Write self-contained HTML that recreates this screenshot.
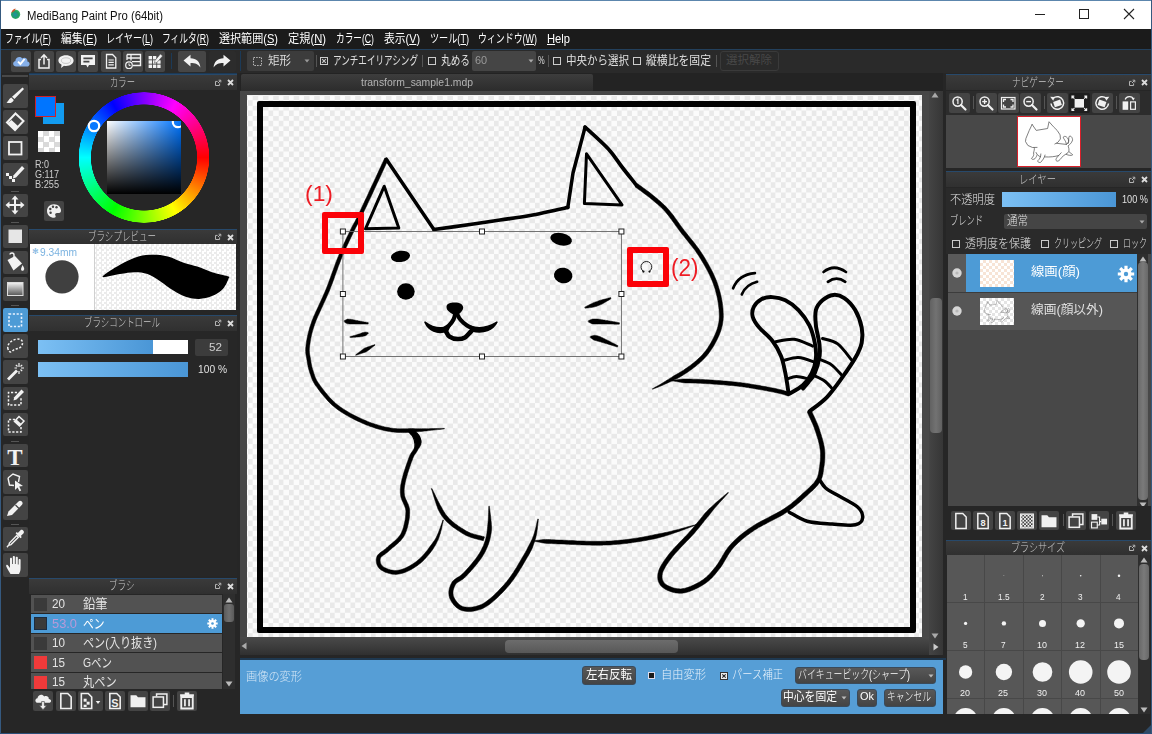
<!DOCTYPE html>
<html lang="ja"><head><meta charset="utf-8"><title>MediBang Paint Pro (64bit)</title>
<style>
html,body{margin:0;padding:0;}
body{width:1152px;height:734px;overflow:hidden;background:#262626;font-family:"Liberation Sans","Noto Sans CJK JP",sans-serif;position:relative;}
#app{position:absolute;left:0;top:0;width:1152px;height:734px;overflow:hidden;}
#app div,#app span.t,#app svg{position:absolute;box-sizing:border-box;}
#app div{overflow:hidden;}
span.t{white-space:nowrap;transform-origin:0 0;}
</style></head><body><div id="app">
<div style="left:0px;top:0px;width:1152px;height:734px;background:#262626;"></div>
<div style="left:0px;top:0px;width:1152px;height:29px;background:#ffffff;"></div>
<svg style="left:8px;top:6px;" width="16" height="16" viewBox="0 0 16 16"><defs><radialGradient id="ig" cx="0.45" cy="0.55" r="0.6"><stop offset="0" stop-color="#1f8fa8"/><stop offset="0.6" stop-color="#22a066"/><stop offset="1" stop-color="#3fc26c"/></radialGradient></defs><circle cx="7.6" cy="8.3" r="4.6" fill="url(#ig)"/><path d="M3.4 7.2 C3.6 4.5 5.6 2.6 7.6 2.4 C7.3 4 6.6 5.2 5.2 5.8 C4.4 6.2 3.8 6.6 3.4 7.2Z" fill="#d4532a"/></svg>
<span class="t" style="left:26.5px;top:8.5px;font-size:12px;line-height:14px;color:#111;transform:scaleX(0.9439);">MediBang Paint Pro (64bit)</span>
<svg style="left:1034px;top:8px;" width="12" height="12" viewBox="0 0 12 12"><path d="M1 6.5H11" stroke="#222" stroke-width="1" fill="none"/></svg>
<svg style="left:1078px;top:8px;" width="12" height="12" viewBox="0 0 12 12"><rect x="1.5" y="1.5" width="9" height="9" stroke="#222" stroke-width="1" fill="none"/></svg>
<svg style="left:1123px;top:8px;" width="12" height="12" viewBox="0 0 12 12"><path d="M1 1L11 11M11 1L1 11" stroke="#222" stroke-width="1.1" fill="none"/></svg>
<div style="left:0px;top:29px;width:1152px;height:20px;background:#1b1b1b;"></div>
<span class="t" style="left:5px;top:32px;font-size:12px;line-height:14px;color:#fff;transform:scaleX(0.7262);">ファイル(<u>F</u>)</span>
<span class="t" style="left:61px;top:32px;font-size:12px;line-height:14px;color:#fff;transform:scaleX(0.8996);">編集(<u>E</u>)</span>
<span class="t" style="left:106px;top:32px;font-size:12px;line-height:14px;color:#fff;transform:scaleX(0.7541);">レイヤー(<u>L</u>)</span>
<span class="t" style="left:162px;top:32px;font-size:12px;line-height:14px;color:#fff;transform:scaleX(0.7294);">フィルタ(<u>R</u>)</span>
<span class="t" style="left:219px;top:32px;font-size:12px;line-height:14px;color:#fff;transform:scaleX(0.9216);">選択範囲(<u>S</u>)</span>
<span class="t" style="left:288px;top:32px;font-size:12px;line-height:14px;color:#fff;transform:scaleX(0.9343);">定規(<u>N</u>)</span>
<span class="t" style="left:336px;top:32px;font-size:12px;line-height:14px;color:#fff;transform:scaleX(0.7214);">カラー(<u>C</u>)</span>
<span class="t" style="left:384px;top:32px;font-size:12px;line-height:14px;color:#fff;transform:scaleX(0.8996);">表示(<u>V</u>)</span>
<span class="t" style="left:430px;top:32px;font-size:12px;line-height:14px;color:#fff;transform:scaleX(0.7596);">ツール(<u>T</u>)</span>
<span class="t" style="left:478px;top:32px;font-size:12px;line-height:14px;color:#fff;transform:scaleX(0.7437);">ウィンドウ(<u>W</u>)</span>
<span class="t" style="left:547px;top:32px;font-size:12px;line-height:14px;color:#fff;transform:scaleX(0.9316);"><u>H</u>elp</span>
<div style="left:0px;top:49px;width:1152px;height:24px;background:#2a2a2a;"></div>
<div style="left:0px;top:49px;width:1152px;height:1px;background:#23405c;"></div>
<div style="left:11px;top:51px;width:20px;height:20.5px;background:#464646;border-radius:2px;"></div>
<div style="left:33.5px;top:51px;width:20px;height:20.5px;background:#464646;border-radius:2px;"></div>
<div style="left:56px;top:51px;width:20px;height:20.5px;background:#464646;border-radius:2px;"></div>
<div style="left:78.2px;top:51px;width:20px;height:20.5px;background:#464646;border-radius:2px;"></div>
<div style="left:100.5px;top:51px;width:20px;height:20.5px;background:#464646;border-radius:2px;"></div>
<div style="left:122.5px;top:51px;width:20px;height:20.5px;background:#464646;border-radius:2px;"></div>
<div style="left:145px;top:51px;width:20px;height:20.5px;background:#464646;border-radius:2px;"></div>
<div style="left:170.5px;top:53px;width:1px;height:16px;background:#1c3a57;"></div>
<div style="left:178px;top:51px;width:27.5px;height:20.5px;background:#464646;border-radius:2px;"></div>
<div style="left:208.5px;top:51px;width:27px;height:20.5px;background:#2c2c2c;border-radius:2px;"></div>
<div style="left:240px;top:51px;width:1px;height:20px;background:#1c3a57;"></div>
<div style="left:8px;top:72.5px;width:229px;height:1px;background:#1c3a57;"></div>
<svg style="left:11px;top:51px;" width="20" height="20.5" viewBox="0 0 20 20.5"><path d="M5.2 15.5C1.6 15.5 1 10.8 4.4 10C4.4 6.4 9 4.6 11.2 7.4C13.6 5.6 17 7.4 16.4 10.4C19.6 10.8 19.2 15.5 16 15.5Z" fill="#86b0ea"/><path d="M7 10.6L9.4 13L13.6 8" fill="none" stroke="#fff" stroke-width="1.9"/></svg>
<svg style="left:33.5px;top:51px;" width="20" height="20.5" viewBox="0 0 20 20.5"><path d="M7 8.5H5V17H15V8.5H13" fill="none" stroke="#f2f2f2" stroke-width="1.5"/><path d="M10 13.5V4.2M7 7L10 3.8L13 7" fill="none" stroke="#f2f2f2" stroke-width="1.5"/></svg>
<svg style="left:56px;top:51px;" width="20" height="20.5" viewBox="0 0 20 20.5"><path d="M10 4.2C14.6 4.2 17.6 6.6 17.6 9.6C17.6 12.6 14.6 15 10 15C9.2 15 8.6 14.9 8 14.8L5 17L5.6 13.8C3.6 12.8 2.4 11.4 2.4 9.6C2.4 6.6 5.4 4.2 10 4.2Z" fill="#f2f2f2"/><ellipse cx="10" cy="9.6" rx="4.6" ry="2.8" fill="none" stroke="#bbb" stroke-width="0.8"/></svg>
<svg style="left:78.2px;top:51px;" width="20" height="20.5" viewBox="0 0 20 20.5"><path d="M3 4H17V14H11L9.6 16.4L8.2 14H3Z" fill="#f2f2f2"/><path d="M5.4 7.4H14.6M5.4 10.6H11.4" stroke="#464646" stroke-width="1.6"/></svg>
<svg style="left:100.5px;top:51px;" width="20" height="20.5" viewBox="0 0 20 20.5"><path d="M5.5 3.5H11.5L14.8 6.8V17H5.5Z" fill="none" stroke="#f2f2f2" stroke-width="1.3"/><path d="M7.5 9H12.8M7.5 11.4H12.8M7.5 13.8H12.8" stroke="#f2f2f2" stroke-width="1.2"/></svg>
<svg style="left:122.5px;top:51px;" width="20" height="20.5" viewBox="0 0 20 20.5"><path d="M4 3.5H17.5V14.5H10" fill="none" stroke="#f2f2f2" stroke-width="1.4"/><path d="M4 3.5V9M8 3.5V9.4M4 7H17.5M9 10.6H17.5" fill="none" stroke="#f2f2f2" stroke-width="1.3"/><circle cx="6" cy="14.2" r="3.3" fill="#464646" stroke="#f2f2f2" stroke-width="1.2"/><path d="M6 12.4V14.4H7.6" fill="none" stroke="#f2f2f2" stroke-width="1"/></svg>
<svg style="left:145px;top:51px;" width="20" height="20.5" viewBox="0 0 20 20.5"><rect x="3.6" y="5.0" width="3.4" height="3.4" fill="#f2f2f2"/><rect x="7.9" y="5.0" width="3.4" height="3.4" fill="#f2f2f2"/><rect x="3.6" y="9.3" width="3.4" height="3.4" fill="#f2f2f2"/><rect x="7.9" y="9.3" width="3.4" height="3.4" fill="#f2f2f2"/><rect x="12.2" y="9.3" width="3.4" height="3.4" fill="#f2f2f2"/><rect x="3.6" y="13.6" width="3.4" height="3.4" fill="#f2f2f2"/><rect x="7.9" y="13.6" width="3.4" height="3.4" fill="#f2f2f2"/><rect x="12.2" y="13.6" width="3.4" height="3.4" fill="#f2f2f2"/><path d="M15.4 3L17.6 5L12 11.4L9.4 12.2L10 9.4Z" fill="#f2f2f2" stroke="#464646" stroke-width="0.5"/></svg>
<svg style="left:178px;top:51px;" width="27.5" height="20.5" viewBox="0 0 27.5 20.5"><path d="M5.5 9.6L12.5 3.8V7.2C18.5 7.4 22 10.5 22.4 16.6C20.4 13.4 17.5 12 12.5 12V15.4Z" fill="#f2f2f2"/></svg>
<svg style="left:208.5px;top:51px;" width="27" height="20.5" viewBox="0 0 27 20.5"><path d="M21.5 9.6L14.5 3.8V7.2C8.5 7.4 5 10.5 4.6 16.6C6.6 13.4 9.5 12 14.5 12V15.4Z" fill="#f2f2f2"/></svg>
<div style="left:247px;top:51px;width:67px;height:20px;background:#3c3c3c;border-radius:2px;"></div>
<svg style="left:252px;top:56px;" width="11" height="11" viewBox="0 0 11 11"><rect x="1.5" y="1.5" width="8" height="8" fill="none" stroke="#bbb" stroke-width="1" stroke-dasharray="1.5 1.2"/></svg>
<span class="t" style="left:268px;top:53.5px;font-size:12px;line-height:14px;color:#ddd;transform:scaleX(0.9577);">矩形</span>
<svg style="left:303px;top:58px;" width="8" height="6" viewBox="0 0 8 6"><path d="M1.5 1.5L4 4.5L6.5 1.5Z" fill="#999"/></svg>
<div style="left:316px;top:55px;width:1px;height:12px;background:#555;"></div>
<svg style="left:320px;top:57px;" width="8" height="8" viewBox="0 0 8 8"><rect x="0.5" y="0.5" width="7" height="7" fill="none" stroke="#ccc" stroke-width="1"/><path d="M2.2 2.2L5.8 5.8M5.8 2.2L2.2 5.8" stroke="#ccc" stroke-width="1.1"/></svg>
<span class="t" style="left:333px;top:53.5px;font-size:12px;line-height:14px;color:#e0e0e0;transform:scaleX(0.714);">アンチエイリアシング</span>
<div style="left:422px;top:55px;width:1px;height:12px;background:#555;"></div>
<svg style="left:428px;top:57px;" width="8" height="8" viewBox="0 0 8 8"><rect x="0.5" y="0.5" width="7" height="7" fill="none" stroke="#ccc" stroke-width="1"/></svg>
<span class="t" style="left:441px;top:53.5px;font-size:12px;line-height:14px;color:#e0e0e0;transform:scaleX(0.8052);">丸める</span>
<div style="left:472px;top:51px;width:64px;height:20px;background:#454545;border-radius:2px;"></div>
<span class="t" style="left:475px;top:54px;font-size:11.5px;line-height:13.5px;color:#999;transform:scaleX(0.95);">60</span>
<svg style="left:527px;top:58px;" width="8" height="6" viewBox="0 0 8 6"><path d="M1.5 1.5L4 4.5L6.5 1.5Z" fill="#aaa"/></svg>
<span class="t" style="left:538px;top:54.5px;font-size:10px;line-height:12px;color:#ddd;transform:scaleX(0.75);">%</span>
<div style="left:548px;top:55px;width:1px;height:12px;background:#555;"></div>
<svg style="left:553px;top:57px;" width="8" height="8" viewBox="0 0 8 8"><rect x="0.5" y="0.5" width="7" height="7" fill="none" stroke="#ccc" stroke-width="1"/></svg>
<span class="t" style="left:566px;top:53.5px;font-size:12px;line-height:14px;color:#e0e0e0;transform:scaleX(0.8748);">中央から選択</span>
<svg style="left:633px;top:57px;" width="8" height="8" viewBox="0 0 8 8"><rect x="0.5" y="0.5" width="7" height="7" fill="none" stroke="#ccc" stroke-width="1"/></svg>
<span class="t" style="left:646px;top:53.5px;font-size:12px;line-height:14px;color:#e0e0e0;transform:scaleX(0.9026);">縦横比を固定</span>
<div style="left:716px;top:55px;width:1px;height:12px;background:#555;"></div>
<div style="left:720px;top:51px;width:59px;height:20px;border:1px solid #3a3a3a;border-radius:3px;"></div>
<span class="t" style="left:726px;top:54px;font-size:11.5px;line-height:13.5px;color:#484848;">選択解除</span>
<div style="left:0px;top:73px;width:29px;height:642px;background:#262626;"></div>
<div style="left:2px;top:75px;width:26px;height:2px;background:#484848;"></div>
<div style="left:3px;top:84.0px;width:24.5px;height:23.6px;background:#444;border-radius:2px;"></div>
<svg style="left:3.2px;top:83.8px;" width="24" height="24" viewBox="0 0 24 24"><path d="M19.5 3.5L21 5L11.5 15L9 12.8Z" fill="#f2f2f2"/><path d="M8.2 13.6L10.8 16C10 18.8 6.5 19.8 3.5 18.6C5.4 17.6 5.6 15 8.2 13.6Z" fill="#f2f2f2"/></svg>
<div style="left:3px;top:110.2px;width:24.5px;height:23.6px;background:#444;border-radius:2px;"></div>
<svg style="left:3.2px;top:110.0px;" width="24" height="24" viewBox="0 0 24 24"><path d="M12.5 3.5L20.5 11L12 20L4 12.5Z" fill="none" stroke="#f2f2f2" stroke-width="2"/><path d="M8.5 10L15.5 16.5L12 20L4.8 12.9Z" fill="#f2f2f2"/></svg>
<div style="left:3px;top:136.4px;width:24.5px;height:23.6px;background:#444;border-radius:2px;"></div>
<svg style="left:3.2px;top:136.2px;" width="24" height="24" viewBox="0 0 24 24"><rect x="6" y="6" width="12.5" height="12.5" fill="none" stroke="#f2f2f2" stroke-width="1.8"/></svg>
<div style="left:3px;top:162.6px;width:24.5px;height:23.6px;background:#444;border-radius:2px;"></div>
<svg style="left:3.2px;top:162.4px;" width="24" height="24" viewBox="0 0 24 24"><path d="M19 4L21.5 6.5L13 15.5L9.8 16.5L10.6 13.2Z" fill="#f2f2f2"/><rect x="3" y="11" width="3" height="3" fill="#f2f2f2"/><rect x="6" y="14" width="3" height="3" fill="#f2f2f2"/><rect x="9" y="17" width="3" height="3" fill="#f2f2f2"/></svg>
<div style="left:11px;top:190.79999999999998px;width:8px;height:1px;background:#555;"></div>
<div style="left:3px;top:193.6px;width:24.5px;height:23.6px;background:#444;border-radius:2px;"></div>
<svg style="left:3.2px;top:193.4px;" width="24" height="24" viewBox="0 0 24 24"><path d="M12 2.5L15.5 6.5H13V11H17.5V8.5L21.5 12L17.5 15.5V13H13V17.5H15.5L12 21.5L8.5 17.5H11V13H6.5V15.5L2.5 12L6.5 8.5V11H11V6.5H8.5Z" fill="#f2f2f2"/></svg>
<div style="left:11px;top:221.79999999999998px;width:8px;height:1px;background:#555;"></div>
<div style="left:3px;top:224.6px;width:24.5px;height:23.6px;background:#444;border-radius:2px;"></div>
<svg style="left:3.2px;top:224.4px;" width="24" height="24" viewBox="0 0 24 24"><rect x="5.5" y="5.5" width="13.5" height="13.5" fill="#e6e6e6"/></svg>
<div style="left:3px;top:250.8px;width:24.5px;height:23.6px;background:#444;border-radius:2px;"></div>
<svg style="left:3.2px;top:250.6px;" width="24" height="24" viewBox="0 0 24 24"><path d="M7 3.5C7 1.5 11 1.5 11 4V8" fill="none" stroke="#f2f2f2" stroke-width="1.4"/><path d="M4.5 9L12 5L19 12.5L10.5 19.5Z" fill="#f2f2f2"/><path d="M19.5 14C21 16.5 22 18 20.5 19.5C19 20.5 17.5 19 18.2 17.2Z" fill="#f2f2f2"/></svg>
<div style="left:3px;top:277.0px;width:24.5px;height:23.6px;background:#444;border-radius:2px;"></div>
<svg style="left:3.2px;top:276.8px;" width="24" height="24" viewBox="0 0 24 24"><defs><linearGradient id="tg" x1="0" y1="0" x2="0" y2="1"><stop offset="0" stop-color="#f4f4f4"/><stop offset="1" stop-color="#555"/></linearGradient></defs><rect x="4.5" y="5.5" width="15.5" height="13" fill="url(#tg)" stroke="#ddd" stroke-width="1"/></svg>
<div style="left:11px;top:305.2px;width:8px;height:1px;background:#555;"></div>
<div style="left:3px;top:308.0px;width:24.5px;height:23.6px;background:#4d9bd6;border-radius:2px;"></div>
<svg style="left:3.2px;top:307.8px;" width="24" height="24" viewBox="0 0 24 24"><rect x="6" y="6" width="12.5" height="12.5" fill="none" stroke="#e8f2ff" stroke-width="1.6" stroke-dasharray="2.2 1.6"/></svg>
<div style="left:3px;top:334.2px;width:24.5px;height:23.6px;background:#444;border-radius:2px;"></div>
<svg style="left:3.2px;top:334.0px;" width="24" height="24" viewBox="0 0 24 24"><path d="M5 15C3.5 11 8 6 13.5 5.2C19 4.5 21 8 18.5 12C16.5 15.5 12 14 9.5 17C8 19 5.8 18 5 15Z" fill="none" stroke="#f2f2f2" stroke-width="1.5" stroke-dasharray="2.2 1.6"/></svg>
<div style="left:3px;top:360.4px;width:24.5px;height:23.6px;background:#444;border-radius:2px;"></div>
<svg style="left:3.2px;top:360.2px;" width="24" height="24" viewBox="0 0 24 24"><path d="M4 18.5L13 9.5L15 11.5L6 20.5Z" fill="#f2f2f2"/><path d="M16 3V7M16 11V14M11.5 8H14M18 8H21M12.8 4.8L14.5 6.5M19.2 4.8L17.5 6.5M19.2 11.2L17.5 9.5" stroke="#f2f2f2" stroke-width="1.2"/></svg>
<div style="left:3px;top:386.6px;width:24.5px;height:23.6px;background:#444;border-radius:2px;"></div>
<svg style="left:3.2px;top:386.4px;" width="24" height="24" viewBox="0 0 24 24"><path d="M14 6.5H5.5V19H18V11" fill="none" stroke="#f2f2f2" stroke-width="1.5" stroke-dasharray="2.2 1.6"/><path d="M18.5 3.5L21 6L13.5 13.5L10.5 14.5L11.2 11.2Z" fill="#f2f2f2"/></svg>
<div style="left:3px;top:412.8px;width:24.5px;height:23.6px;background:#444;border-radius:2px;"></div>
<svg style="left:3.2px;top:412.6px;" width="24" height="24" viewBox="0 0 24 24"><path d="M12 6.5H5.5V19H18V13" fill="none" stroke="#f2f2f2" stroke-width="1.5" stroke-dasharray="2.2 1.6"/><path d="M16 3.5L21 8L16.5 13L11.5 8.5Z" fill="none" stroke="#f2f2f2" stroke-width="1.5"/><path d="M13.5 6.5L18.5 11L16.5 13L11.5 8.5Z" fill="#f2f2f2"/></svg>
<div style="left:11px;top:440.99999999999994px;width:8px;height:1px;background:#555;"></div>
<div style="left:3px;top:443.8px;width:24.5px;height:23.6px;background:#444;border-radius:2px;"></div>
<svg style="left:3.2px;top:443.6px;" width="24" height="24" viewBox="0 0 24 24"><text x="12" y="20.5" font-family="'Liberation Serif',serif" font-size="23" font-weight="bold" text-anchor="middle" fill="#f2f2f2">T</text></svg>
<div style="left:3px;top:470.0px;width:24.5px;height:23.6px;background:#444;border-radius:2px;"></div>
<svg style="left:3.2px;top:469.8px;" width="24" height="24" viewBox="0 0 24 24"><path d="M5 8L10 4L16.5 6.5L15.5 12" fill="none" stroke="#f2f2f2" stroke-width="1.4"/><path d="M5 8L6.5 15L11 15.5" fill="none" stroke="#f2f2f2" stroke-width="1.4"/><path d="M12 10.5L20 16L16.2 16.6L18.2 20.5L16.5 21.3L14.6 17.4L12 20Z" fill="#f2f2f2"/></svg>
<div style="left:3px;top:496.2px;width:24.5px;height:23.6px;background:#444;border-radius:2px;"></div>
<svg style="left:3.2px;top:496.0px;" width="24" height="24" viewBox="0 0 24 24"><path d="M4 20L5.5 15.5L15.5 5.5C17.5 3.5 21 6.5 19 8.8L9 19Z" fill="#f2f2f2"/><path d="M12.5 9L16 12.5" stroke="#444" stroke-width="1.2"/></svg>
<div style="left:11px;top:524.4px;width:8px;height:1px;background:#555;"></div>
<div style="left:3px;top:527.2px;width:24.5px;height:23.6px;background:#444;border-radius:2px;"></div>
<svg style="left:3.2px;top:527.0px;" width="24" height="24" viewBox="0 0 24 24"><path d="M17.5 3.2C19 1.8 22 4.5 20.6 6.2L17.8 9L18.8 10L17.6 11.2L12.6 6.2L13.8 5L14.8 6Z" fill="#f2f2f2"/><path d="M13.8 8.6L15.4 10.2L8 17.6L5.8 18.2L6.4 16Z" fill="none" stroke="#f2f2f2" stroke-width="1.4"/><path d="M5.4 18.4L4 20.2" stroke="#f2f2f2" stroke-width="1.4"/></svg>
<div style="left:3px;top:553.4px;width:24.5px;height:23.6px;background:#444;border-radius:2px;"></div>
<svg style="left:3.2px;top:553.2px;" width="24" height="24" viewBox="0 0 24 24"><path d="M7.5 21C6 18.5 4 15.5 3.2 13.2C2.8 12 4.3 11.3 5.1 12.4L7 15V5.8C7 4.4 9 4.4 9 5.8V11H9.8V4C9.8 2.6 11.9 2.6 11.9 4V11H12.7V4.8C12.7 3.4 14.8 3.4 14.8 4.8V11.4H15.6V7C15.6 5.6 17.6 5.6 17.6 7V15C17.6 18 16.8 19.5 16 21Z" fill="#f2f2f2"/></svg>
<div style="left:29px;top:75px;width:208px;height:154px;background:#262626;"></div>
<div style="left:29px;top:74px;width:208px;height:1px;background:#27496b;"></div>
<div style="left:29px;top:75px;width:208px;height:15px;background:linear-gradient(#3a3a3a,#303030);"></div>
<span class="t" style="left:109.5px;top:75.5px;font-size:12px;line-height:14px;color:#c8c8c8;transform:scaleX(0.6941);font-weight:300;">カラー</span>
<svg style="left:214px;top:78.5px;" width="8" height="8" viewBox="0 0 8 8"><path d="M3.6 2.4H1.5V6.5H5.6V4.4" fill="none" stroke="#b4b4b4" stroke-width="1"/><path d="M4 4L6.6 1.4M4.6 1.2H6.8V3.4" fill="none" stroke="#b4b4b4" stroke-width="1"/></svg>
<svg style="left:225.5px;top:78px;" width="9" height="9" viewBox="0 0 9 9"><path d="M2 2L7 7M7 2L2 7" stroke="#ddd" stroke-width="1.8"/></svg>
<div style="left:43px;top:103px;width:20.5px;height:21px;background:#129bf0;"></div>
<div style="left:34.5px;top:95.5px;width:21.5px;height:21px;background:#0075ff;border:1px solid #d0202a;"></div>
<div style="left:38px;top:130.5px;width:22px;height:21.5px;background:#fff;background-image:conic-gradient(#d9d9d9 25%,#fff 0 50%,#d9d9d9 0 75%,#fff 0);background-size:11px 11px;"></div>
<span class="t" style="left:35px;top:158px;font-size:10.5px;line-height:12.5px;color:#cfcfcf;transform:scaleX(0.8566);">R:0</span>
<span class="t" style="left:35px;top:168px;font-size:10.5px;line-height:12.5px;color:#cfcfcf;transform:scaleX(0.8624);">G:117</span>
<span class="t" style="left:35px;top:178px;font-size:10.5px;line-height:12.5px;color:#cfcfcf;transform:scaleX(0.8742);">B:255</span>
<div style="left:43.5px;top:201px;width:20px;height:20px;background:#444;border-radius:2px;"></div>
<svg style="left:44.5px;top:202px;" width="18" height="18" viewBox="0 0 18 18"><path d="M9 2.2C4.5 2.2 2 5.5 2 9C2 13 5.5 15.8 9 15.8C10.8 15.8 11 14.6 10.4 13.6C9.6 12.2 10.6 11 12 11H14C15.4 11 16 10 16 8.6C16 5 13 2.2 9 2.2Z" fill="#f0f0f0"/><circle cx="5.3" cy="7" r="1.2" fill="#444"/><circle cx="8" cy="4.8" r="1.2" fill="#444"/><circle cx="11.5" cy="5.2" r="1.2" fill="#444"/><circle cx="5.6" cy="10.8" r="1.2" fill="#444"/></svg>
<div style="left:78px;top:91.5px;width:131.5px;height:131.5px;background:conic-gradient(from 90deg,#f00,#ff0,#0f0,#0ff,#00f,#f0f,#f00);border-radius:50%;-webkit-mask:radial-gradient(circle closest-side,transparent 0 80.6%,#000 81.4% 99.2%,transparent 100%);mask:radial-gradient(circle closest-side,transparent 0 80.6%,#000 81.4% 99.2%,transparent 100%);"></div>
<div style="left:107px;top:120.5px;width:73.5px;height:73px;background:#0075ff;background-image:linear-gradient(to bottom,rgba(0,0,0,0),#000),linear-gradient(to right,#fff,rgba(255,255,255,0));"><svg style="left:62.5px;top:-6.5px" width="16" height="16"><circle cx="8" cy="8" r="5.2" fill="none" stroke="#fff" stroke-width="2.2"/></svg></div>
<svg style="left:86px;top:117.5px;" width="16" height="16" viewBox="0 0 16 16"><circle cx="8" cy="8" r="5.2" fill="#0a78ff" stroke="#fff" stroke-width="2.2"/></svg>
<div style="left:29px;top:228.5px;width:208px;height:1px;background:#27496b;"></div>
<div style="left:29px;top:229.5px;width:208px;height:14px;background:linear-gradient(#3a3a3a,#303030);"></div>
<span class="t" style="left:88.0px;top:230.0px;font-size:12px;line-height:14px;color:#c8c8c8;transform:scaleX(0.7101);font-weight:300;">ブラシプレビュー</span>
<svg style="left:214px;top:233.0px;" width="8" height="8" viewBox="0 0 8 8"><path d="M3.6 2.4H1.5V6.5H5.6V4.4" fill="none" stroke="#b4b4b4" stroke-width="1"/><path d="M4 4L6.6 1.4M4.6 1.2H6.8V3.4" fill="none" stroke="#b4b4b4" stroke-width="1"/></svg>
<svg style="left:225.5px;top:232.5px;" width="9" height="9" viewBox="0 0 9 9"><path d="M2 2L7 7M7 2L2 7" stroke="#ddd" stroke-width="1.8"/></svg>
<div style="left:29.5px;top:243.5px;width:64.5px;height:66px;background:#fff;"></div>
<div style="left:94px;top:243.5px;width:142px;height:66px;background:#fff;background-image:conic-gradient(#ebebeb 25%,#fff 0 50%,#ebebeb 0 75%,#fff 0);background-size:5px 5px;"></div>
<div style="left:93.8px;top:243.5px;width:1px;height:66px;background:#d0d0d0;"></div>
<span class="t" style="left:31.5px;top:247px;font-size:8px;line-height:10px;color:#7ab2e0;">✻</span>
<span class="t" style="left:39.5px;top:246px;font-size:10.5px;line-height:12.5px;color:#7ab2e0;transform:scaleX(0.9753);">9.34mm</span>
<svg style="left:44px;top:259px;" width="36" height="36" viewBox="0 0 36 36"><circle cx="18" cy="17.8" r="16.6" fill="#404040"/></svg>
<svg style="left:96px;top:245px;" width="140" height="64" viewBox="96 245 140 64"><path d="M102.5 276.8C102.5 275.3 114.0 268.2 120.0 264.8C126.0 261.4 132.9 258.2 138.4 256.5C143.9 254.8 148.2 254.7 153.1 254.7C158.0 254.7 162.7 255.1 167.9 256.5C173.1 257.9 179.5 261.3 184.4 263.0C189.3 264.7 192.7 265.1 197.3 266.6C201.9 268.1 206.9 270.6 212.0 272.2C217.1 273.8 224.9 275.1 227.7 276.2C230.5 277.3 229.4 276.5 228.6 278.6C227.8 280.7 225.9 285.8 223.1 288.7C220.3 291.6 216.0 294.4 212.0 296.1C208.0 297.8 203.4 298.8 199.1 298.9C194.8 299.0 190.6 298.4 186.3 297.0C182.0 295.6 177.7 293.2 173.4 290.6C169.1 288.0 164.8 284.2 160.5 281.4C156.2 278.6 151.9 275.5 147.6 274.0C143.3 272.5 139.3 272.2 134.7 272.2C130.1 272.2 125.4 273.2 120.0 274.0C114.6 274.8 102.5 278.3 102.5 276.8Z" fill="#000"/></svg>
<div style="left:29px;top:314.5px;width:208px;height:1px;background:#27496b;"></div>
<div style="left:29px;top:315.5px;width:208px;height:15px;background:linear-gradient(#3a3a3a,#303030);"></div>
<span class="t" style="left:84.0px;top:316.0px;font-size:12px;line-height:14px;color:#c8c8c8;transform:scaleX(0.7052);font-weight:300;">ブラシコントロール</span>
<svg style="left:214px;top:319.0px;" width="8" height="8" viewBox="0 0 8 8"><path d="M3.6 2.4H1.5V6.5H5.6V4.4" fill="none" stroke="#b4b4b4" stroke-width="1"/><path d="M4 4L6.6 1.4M4.6 1.2H6.8V3.4" fill="none" stroke="#b4b4b4" stroke-width="1"/></svg>
<svg style="left:225.5px;top:318.5px;" width="9" height="9" viewBox="0 0 9 9"><path d="M2 2L7 7M7 2L2 7" stroke="#ddd" stroke-width="1.8"/></svg>
<div style="left:29px;top:331px;width:208px;height:245px;background:#272727;"></div>
<div style="left:38px;top:339.5px;width:150px;height:14.5px;background:#fff;"></div>
<div style="left:38px;top:339.5px;width:114.5px;height:14.5px;background:linear-gradient(to right,#7cc0f4,#4a96d6);"></div>
<div style="left:194.5px;top:338.5px;width:33px;height:17px;background:#3c3c3c;border-radius:2px;"></div>
<span class="t" style="left:209px;top:340.5px;font-size:11.5px;line-height:13.5px;color:#cfcfcf;transform:scaleX(1.0159);">52</span>
<div style="left:38px;top:362px;width:150px;height:14.5px;background:linear-gradient(to right,#7cc0f4,#4a96d6);"></div>
<span class="t" style="left:197.5px;top:362.5px;font-size:11.5px;line-height:13.5px;color:#e0e0e0;transform:scaleX(0.8893);">100 %</span>
<div style="left:29px;top:577.5px;width:208px;height:1px;background:#27496b;"></div>
<div style="left:29px;top:578.5px;width:208px;height:15px;background:linear-gradient(#3a3a3a,#303030);"></div>
<span class="t" style="left:109.25px;top:579.0px;font-size:12px;line-height:14px;color:#c8c8c8;transform:scaleX(0.713);font-weight:300;">ブラシ</span>
<svg style="left:214px;top:582.0px;" width="8" height="8" viewBox="0 0 8 8"><path d="M3.6 2.4H1.5V6.5H5.6V4.4" fill="none" stroke="#b4b4b4" stroke-width="1"/><path d="M4 4L6.6 1.4M4.6 1.2H6.8V3.4" fill="none" stroke="#b4b4b4" stroke-width="1"/></svg>
<svg style="left:225.5px;top:581.5px;" width="9" height="9" viewBox="0 0 9 9"><path d="M2 2L7 7M7 2L2 7" stroke="#ddd" stroke-width="1.8"/></svg>
<div style="left:29px;top:594px;width:208px;height:121px;background:#262626;"></div>
<div style="left:31px;top:594.8px;width:191px;height:18.6px;background:#525252;"></div>
<div style="left:34px;top:597.8px;width:13px;height:13px;background:#3a3a3a;"></div>
<span class="t" style="left:51.5px;top:597.3px;font-size:12px;line-height:14px;color:#e4e4e4;transform:scaleX(0.9731);">20</span>
<span class="t" style="left:82.5px;top:596.3px;font-size:13px;line-height:15px;color:#e4e4e4;transform:scaleX(0.9456);">鉛筆</span>
<div style="left:31px;top:614.2px;width:191px;height:18.6px;background:#4d9bd6;"></div>
<div style="left:34px;top:617.2px;width:13px;height:13px;background:#3a3a3a;border:1px solid #1c2c40;"></div>
<span class="t" style="left:51.5px;top:616.8px;font-size:12px;line-height:14px;color:#b89ad8;transform:scaleX(1.0702);">53.0</span>
<span class="t" style="left:82.5px;top:615.8px;font-size:13px;line-height:15px;color:#fff;transform:scaleX(0.8264);">ペン</span>
<div style="left:31px;top:633.7px;width:191px;height:18.6px;background:#525252;"></div>
<div style="left:34px;top:636.7px;width:13px;height:13px;background:#3a3a3a;"></div>
<span class="t" style="left:51.5px;top:636.2px;font-size:12px;line-height:14px;color:#e4e4e4;transform:scaleX(0.9731);">10</span>
<span class="t" style="left:82.5px;top:635.2px;font-size:13px;line-height:15px;color:#e4e4e4;transform:scaleX(0.8538);">ペン(入り抜き)</span>
<div style="left:31px;top:653.2px;width:191px;height:18.6px;background:#525252;"></div>
<div style="left:34px;top:656.2px;width:13px;height:13px;background:#f03a3a;"></div>
<span class="t" style="left:51.5px;top:655.7px;font-size:12px;line-height:14px;color:#e4e4e4;transform:scaleX(0.9731);">15</span>
<span class="t" style="left:82.5px;top:654.7px;font-size:13px;line-height:15px;color:#e4e4e4;transform:scaleX(0.8028);">Gペン</span>
<div style="left:31px;top:672.6px;width:191px;height:18.6px;background:#525252;"></div>
<div style="left:34px;top:675.6px;width:13px;height:13px;background:#f03a3a;"></div>
<span class="t" style="left:51.5px;top:675.1px;font-size:12px;line-height:14px;color:#e4e4e4;transform:scaleX(0.9731);">15</span>
<span class="t" style="left:82.5px;top:674.1px;font-size:13px;line-height:15px;color:#e4e4e4;transform:scaleX(0.8612);">丸ペン</span>
<div style="left:31px;top:688.5px;width:191px;height:3px;background:#262626;"></div>
<svg style="left:207px;top:618px;" width="11" height="11" viewBox="0 0 11 11"><g fill="#fff"><circle cx="5.5" cy="5.5" r="3.4"/><g stroke="#fff" stroke-width="2"><path d="M5.5 0.3V10.7M0.3 5.5H10.7M1.8 1.8L9.2 9.2M9.2 1.8L1.8 9.2"/></g></g><circle cx="5.5" cy="5.5" r="1.3" fill="#4d9bd6"/></svg>
<div style="left:223px;top:594px;width:12px;height:95px;background:#2e2e2e;"></div>
<svg style="left:225px;top:597px;" width="8" height="6" viewBox="0 0 8 6"><path d="M4 0.5L7.5 5.5H0.5Z" fill="#bbb"/></svg>
<svg style="left:225px;top:681px;" width="8" height="6" viewBox="0 0 8 6"><path d="M4 5.5L7.5 0.5H0.5Z" fill="#bbb"/></svg>
<div style="left:224px;top:604px;width:10px;height:18px;background:linear-gradient(to right,#5a5a5a,#707070,#5a5a5a);border-radius:3px;"></div>
<div style="left:33px;top:690.5px;width:20px;height:20px;background:#444;border-radius:2px;"></div>
<div style="left:56px;top:690.5px;width:20px;height:20px;background:#444;border-radius:2px;"></div>
<div style="left:78px;top:690.5px;width:24.5px;height:20px;background:#444;border-radius:2px;"></div>
<div style="left:105px;top:690.5px;width:20px;height:20px;background:#444;border-radius:2px;"></div>
<div style="left:127.5px;top:690.5px;width:20px;height:20px;background:#444;border-radius:2px;"></div>
<div style="left:150px;top:690.5px;width:20px;height:20px;background:#444;border-radius:2px;"></div>
<div style="left:176.5px;top:690.5px;width:20px;height:20px;background:#444;border-radius:2px;"></div>
<div style="left:172.5px;top:695px;width:1px;height:12px;background:#555;"></div>
<svg style="left:33px;top:690.5px;" width="20" height="20" viewBox="0 0 20 20"><g transform="translate(10.0 10.0) scale(1.15) translate(-10.0 -10.0)"><path d="M5.5 11.5C3 11.5 2.5 8 5.2 7.5C5.5 4.5 9.5 3.5 11 6C13 4.8 15.5 6.2 15 8.2C17.8 8.4 17.6 11.5 15 11.5Z" fill="#f0f0f0"/><path d="M8.8 10.5H11.2V14H13.2L10 17.5L6.8 14H8.8Z" fill="#f0f0f0" stroke="#444" stroke-width="0.6"/></g></svg>
<svg style="left:56px;top:690.5px;" width="20" height="20" viewBox="0 0 20 20"><g transform="translate(10.0 10.0) scale(1.15) translate(-10.0 -10.0)"><path d="M5.5 3.5H11.5L14.5 6.5V16.5H5.5Z" fill="none" stroke="#f0f0f0" stroke-width="1.4"/></g></svg>
<svg style="left:78px;top:690.5px;" width="24.5" height="20" viewBox="0 0 24.5 20"><g transform="translate(12.25 10.0) scale(1.15) translate(-12.25 -10.0)"><path d="M4.5 3.5H10.5L13.5 6.5V16.5H4.5Z" fill="none" stroke="#f0f0f0" stroke-width="1.4"/><rect x="6.5" y="8" width="2.6" height="2.6" fill="#f0f0f0"/><rect x="9.1" y="10.6" width="2.6" height="2.6" fill="#f0f0f0"/><rect x="6.5" y="13.2" width="2.6" height="2" fill="#f0f0f0"/><path d="M17 10L19 12.5L21 10Z" fill="#f0f0f0"/></g></svg>
<svg style="left:105px;top:690.5px;" width="20" height="20" viewBox="0 0 20 20"><g transform="translate(10.0 10.0) scale(1.15) translate(-10.0 -10.0)"><path d="M5.5 3.5H11.5L14.5 6.5V16.5H5.5Z" fill="none" stroke="#f0f0f0" stroke-width="1.4"/><text x="10" y="15" font-size="9.5" font-weight="bold" text-anchor="middle" fill="#f0f0f0" font-family="'Liberation Sans',sans-serif">S</text></g></svg>
<svg style="left:127.5px;top:690.5px;" width="20" height="20" viewBox="0 0 20 20"><g transform="translate(10.0 10.0) scale(1.15) translate(-10.0 -10.0)"><path d="M3.5 5H8.5L10 6.8H16.5V15.5H3.5Z" fill="#f0f0f0"/></g></svg>
<svg style="left:150px;top:690.5px;" width="20" height="20" viewBox="0 0 20 20"><g transform="translate(10.0 10.0) scale(1.15) translate(-10.0 -10.0)"><rect x="4" y="6.5" width="9" height="9" fill="none" stroke="#f0f0f0" stroke-width="1.3"/><path d="M7 6V4H16V13H13.5" fill="none" stroke="#f0f0f0" stroke-width="1.3"/></g></svg>
<svg style="left:176.5px;top:690.5px;" width="20" height="20" viewBox="0 0 20 20"><g transform="translate(10.0 10.0) scale(1.15) translate(-10.0 -10.0)"><path d="M5 6.5H15V16.5H5Z" fill="none" stroke="#f0f0f0" stroke-width="1.6"/><path d="M4 5H16M8 3.5H12" stroke="#f0f0f0" stroke-width="1.6"/><path d="M8.2 8.5V14.5M11.8 8.5V14.5" stroke="#f0f0f0" stroke-width="1.5"/></g></svg>
<div style="left:240px;top:73px;width:706px;height:19px;background:#232323;"></div>
<div style="left:241px;top:74px;width:351.5px;height:17px;background:linear-gradient(#3d3d3d,#2c2c2c);border-radius:2px 2px 0 0;"></div>
<span class="t" style="left:360.5px;top:75.5px;font-size:11px;line-height:13px;color:#b4b4b4;transform:scaleX(0.9443);">transform_sample1.mdp</span>
<div style="left:240px;top:91px;width:706px;height:566px;background:#3a3a3a;"></div>
<div style="left:240px;top:91px;width:704px;height:4px;background:#464646;"></div>
<div style="left:240px;top:91px;width:7px;height:546px;background:#464646;"></div>
<div style="left:247px;top:95px;width:675px;height:541.5px;background:#fbfbfb;background-image:conic-gradient(#e9e9e9 25%,#fbfbfb 0 50%,#e9e9e9 0 75%,#fbfbfb 0);background-size:10.26px 10.26px;background-position:5.68px 5.24px;"></div>
<div style="left:257px;top:101px;width:659px;height:532.2px;border:6px solid #000;border-radius:2px;"></div>
<div style="left:922px;top:95px;width:7px;height:542px;background:#484848;"></div>
<div style="left:928.5px;top:91px;width:14px;height:566px;background:linear-gradient(to right,#444,#363636);"></div>
<div style="left:930px;top:298px;width:11.5px;height:134.5px;background:linear-gradient(to right,#626262,#727272,#606060);border-radius:4px;"></div>
<svg style="left:931px;top:92px;" width="8" height="6" viewBox="0 0 8 6"><path d="M4 0.5L7.5 5.5H0.5Z" fill="#aaa"/></svg>
<svg style="left:931px;top:633px;" width="8" height="6" viewBox="0 0 8 6"><path d="M4 5.5L7.5 0.5H0.5Z" fill="#aaa"/></svg>
<div style="left:942.5px;top:73px;width:3.5px;height:642px;background:#262626;"></div>
<div style="left:240px;top:637px;width:689px;height:17.5px;background:linear-gradient(#4a4a4a,#303030);"></div>
<div style="left:240px;top:654.5px;width:706px;height:4px;background:#262626;"></div>
<div style="left:505px;top:640px;width:172.5px;height:12.5px;background:linear-gradient(#6c6c6c,#585858);border-radius:4px;"></div>
<svg style="left:241px;top:642px;" width="6" height="8" viewBox="0 0 6 8"><path d="M0.5 4L5.5 0.5V7.5Z" fill="#aaa"/></svg>
<svg style="left:933px;top:643px;" width="6" height="8" viewBox="0 0 6 8"><path d="M5.5 4L0.5 0.5V7.5Z" fill="#ccc"/></svg>
<svg style="left:247px;top:95px;" width="675" height="541.5" viewBox="247 95 675 541.5"><g fill="none" stroke="#000" stroke-linecap="round" stroke-linejoin="round"><path d="M384.6 158.4L384.0 159.7L383.3 161.2L382.5 163.0L381.5 165.1L380.5 167.3L379.4 169.6L378.3 172.1L377.1 174.6L375.9 177.2L374.7 179.7L373.6 182.2L372.4 184.7L371.3 187.0L370.3 189.2L369.3 191.3L368.3 193.5L367.3 195.7L366.3 197.9L365.2 200.1L364.2 202.3L363.2 204.4L362.2 206.5L361.3 208.5L360.4 210.5L359.5 212.3L358.6 214.1L357.9 215.7L357.1 217.2L356.5 218.5L355.9 219.6L355.5 220.5L355.1 221.3L354.7 221.9L354.3 222.6L354.0 223.1L353.7 223.7L353.3 224.4L352.9 225.1L352.5 225.9L352.0 226.8L351.5 227.9L350.8 229.2L350.1 230.7L349.4 232.2L348.6 233.9L347.7 235.7L346.8 237.5L345.9 239.4L345.0 241.4L344.0 243.5L343.0 245.6L342.1 247.7L341.1 249.9L340.1 252.0L339.2 254.2L338.3 256.4L337.4 258.6L336.5 260.9L335.6 263.2L334.8 265.5L333.9 267.9L333.0 270.4L332.1 272.8L331.3 275.2L330.4 277.7L329.5 280.1L328.6 282.6L327.7 285.0L326.7 287.4L325.8 289.8L324.8 292.2L323.7 294.6L322.7 297.1L321.5 299.6L320.4 302.0L319.2 304.5L318.1 307.0L316.9 309.5L315.8 311.9L314.8 314.3L313.7 316.6L312.8 318.9L311.9 321.1L311.2 323.2L310.5 325.2L309.8 327.2L309.3 329.1L308.8 330.9L308.3 332.7L307.9 334.5L307.5 336.2L307.2 337.8L306.9 339.4L306.6 340.9L306.4 342.4L306.2 343.9L306.0 345.3L305.9 346.6L305.7 347.9L305.7 349.1L305.6 350.3L305.7 351.4L305.7 352.4L305.8 353.4L305.9 354.3L306.1 355.2L306.2 356.1L306.4 356.9L306.5 357.8L306.7 358.6L306.8 359.4L307.0 360.3L307.1 361.2L307.2 362.1L307.4 362.9L307.5 363.8L307.7 364.7L307.9 365.5L308.0 366.4L308.2 367.3L308.4 368.1L308.7 369.0L308.9 369.9L309.2 370.8L309.4 371.7L309.7 372.6L310.0 373.5L310.3 374.3L310.6 375.1L310.9 376.0L311.1 376.8L311.5 377.7L311.8 378.6L312.2 379.6L312.6 380.5L313.2 381.5L313.7 382.6L314.4 383.7L315.1 384.9L316.0 386.1L316.9 387.3L317.9 388.7L319.0 390.2L320.1 391.7L321.3 393.2L322.6 394.8L324.0 396.5L325.4 398.1L326.8 399.7L328.3 401.4L329.9 402.9L331.4 404.5L333.1 405.9L334.7 407.3L336.5 408.7L338.2 410.0L340.1 411.3L342.0 412.5L344.0 413.7L346.0 414.9L348.0 416.1L350.0 417.2L352.1 418.3L354.2 419.4L356.2 420.4L358.3 421.4L360.3 422.3L362.3 423.2L364.2 424.0L366.2 424.9L368.2 425.6L370.2 426.4L372.2 427.1L374.2 427.7L376.1 428.4L378.1 429.0L380.1 429.5L382.1 430.0L384.0 430.5L386.0 430.9L387.9 431.3L389.8 431.6L391.7 431.9L393.5 432.1L395.4 432.3L397.2 432.4L399.0 432.5L400.7 432.5L402.5 432.5L404.2 432.5L406.0 432.5L407.8 432.4L409.6 432.3L411.4 432.2L413.2 432.1L415.1 431.9L417.2 431.8L419.4 431.6L421.7 431.4L424.1 431.1L426.5 430.9L428.9 430.6L431.3 430.3L433.7 430.1L435.9 429.8L438.0 429.6L439.9 429.4L441.7 429.2L443.1 429.0L444.3 428.9L444.3 428.3L443.1 428.4L441.6 428.4L439.9 428.4L437.9 428.5L435.8 428.5L433.6 428.6L431.2 428.6L428.8 428.7L426.4 428.7L423.9 428.7L421.5 428.7L419.2 428.7L417.1 428.7L415.1 428.7L413.1 428.6L411.3 428.6L409.4 428.6L407.6 428.7L405.9 428.8L404.2 428.8L402.5 428.8L400.8 428.8L399.1 428.8L397.4 428.7L395.7 428.6L393.9 428.5L392.2 428.2L390.4 428.0L388.6 427.6L386.7 427.3L384.8 426.9L383.0 426.4L381.1 425.9L379.1 425.4L377.2 424.8L375.3 424.2L373.4 423.6L371.4 422.9L369.5 422.2L367.6 421.4L365.7 420.6L363.7 419.8L361.8 418.9L359.8 418.0L357.8 417.1L355.8 416.1L353.8 415.0L351.8 414.0L349.8 412.9L347.8 411.7L345.9 410.6L344.0 409.4L342.2 408.2L340.4 407.0L338.7 405.7L337.1 404.5L335.5 403.2L334.0 401.8L332.5 400.3L331.0 398.8L329.5 397.3L328.2 395.7L326.8 394.1L325.5 392.5L324.3 391.0L323.1 389.4L321.9 387.9L320.9 386.5L319.9 385.2L319.0 383.9L318.2 382.8L317.5 381.7L316.9 380.7L316.4 379.8L316.0 378.9L315.6 378.1L315.2 377.3L314.9 376.4L314.6 375.6L314.4 374.8L314.1 374.0L313.8 373.2L313.6 372.3L313.3 371.4L313.0 370.5L312.7 369.7L312.5 368.9L312.2 368.1L312.0 367.2L311.8 366.4L311.7 365.6L311.5 364.8L311.3 364.0L311.2 363.2L311.0 362.3L310.9 361.5L310.8 360.6L310.6 359.7L310.5 358.8L310.3 357.9L310.2 357.1L310.0 356.3L309.9 355.4L309.7 354.6L309.6 353.8L309.5 353.0L309.4 352.2L309.4 351.3L309.3 350.3L309.4 349.3L309.4 348.2L309.5 347.0L309.7 345.7L309.9 344.4L310.1 343.0L310.3 341.5L310.5 340.1L310.8 338.5L311.1 336.9L311.5 335.3L311.9 333.6L312.3 331.9L312.8 330.1L313.4 328.3L314.0 326.4L314.6 324.4L315.4 322.4L316.2 320.3L317.1 318.1L318.1 315.8L319.2 313.4L320.3 311.0L321.4 308.6L322.6 306.1L323.7 303.6L324.9 301.1L326.0 298.6L327.1 296.1L328.2 293.6L329.2 291.2L330.2 288.8L331.1 286.3L332.1 283.9L333.0 281.4L333.9 278.9L334.7 276.5L335.6 274.0L336.5 271.6L337.4 269.2L338.2 266.8L339.1 264.5L340.0 262.2L340.8 260.0L341.7 257.8L342.6 255.7L343.5 253.5L344.5 251.4L345.4 249.2L346.4 247.1L347.4 245.0L348.3 243.0L349.2 241.0L350.2 239.1L351.0 237.3L351.9 235.5L352.7 233.8L353.5 232.3L354.2 230.8L354.8 229.5L355.3 228.5L355.8 227.6L356.2 226.8L356.5 226.2L356.9 225.6L357.2 225.0L357.5 224.4L357.9 223.8L358.3 223.0L358.7 222.2L359.2 221.3L359.8 220.1L360.5 218.8L361.2 217.3L362.0 215.7L362.8 213.9L363.7 212.0L364.6 210.1L365.6 208.1L366.6 206.0L367.6 203.8L368.6 201.6L369.6 199.5L370.7 197.3L371.7 195.1L372.7 192.9L373.7 190.8L374.7 188.6L375.8 186.3L376.9 183.8L378.1 181.3L379.3 178.7L380.5 176.2L381.7 173.6L382.8 171.2L383.9 168.8L384.9 166.6L385.8 164.6L386.7 162.8L387.4 161.2L388.0 160.0Z" fill="#000" stroke="#000" stroke-width="0.5"/><path d="M386.3 159.2L433.9 229.5" stroke-width="3.5"/><path d="M433.9 229.5C439.9 228.7 459.0 226.1 470.0 224.5C481.0 222.9 490.0 221.5 500.0 220.0C510.0 218.5 518.7 217.6 530.0 215.5C541.3 213.4 561.5 208.8 567.8 207.4" stroke-width="3.7"/><path d="M567.8 207.4L573.0 173.0L585.1 127.1" stroke-width="3.5"/><path d="M585.1 127.1C589.0 130.8 602.2 142.3 608.4 149.0C614.5 155.7 617.3 160.9 622.0 167.0C626.7 173.1 634.2 182.4 636.6 185.5" stroke-width="3.7"/><path d="M635.4 187.1L636.0 187.6L636.8 188.1L637.7 188.8L638.7 189.5L639.8 190.3L641.0 191.1L642.2 192.0L643.4 192.9L644.7 193.9L646.0 194.8L647.2 195.8L648.5 196.7L649.6 197.6L650.7 198.5L651.8 199.4L652.9 200.3L653.9 201.2L655.0 202.1L656.0 203.0L657.1 203.8L658.1 204.7L659.2 205.7L660.2 206.6L661.2 207.6L662.2 208.6L663.3 209.6L664.3 210.7L665.3 211.8L666.3 213.0L667.3 214.2L668.3 215.4L669.3 216.7L670.2 218.0L671.2 219.3L672.2 220.7L673.2 222.1L674.3 223.6L675.3 225.1L676.4 226.6L677.5 228.1L678.6 229.6L679.8 231.2L681.0 232.8L682.3 234.5L683.7 236.1L685.0 237.8L686.4 239.5L687.8 241.2L689.2 243.0L690.6 244.8L692.0 246.5L693.4 248.3L694.8 250.1L696.1 251.9L697.3 253.8L698.5 255.6L699.7 257.4L700.9 259.3L702.0 261.3L703.2 263.2L704.3 265.1L705.4 267.1L706.5 269.1L707.6 271.1L708.6 273.0L709.6 275.0L710.5 277.0L711.4 279.0L712.2 280.9L712.9 282.8L713.6 284.7L714.3 286.7L714.9 288.6L715.5 290.6L716.0 292.6L716.5 294.5L717.0 296.5L717.4 298.4L717.8 300.4L718.1 302.2L718.4 304.1L718.6 305.9L718.8 307.7L719.0 309.4L719.1 311.0L719.2 312.6L719.3 314.1L719.3 315.6L719.3 317.0L719.2 318.4L719.1 319.7L719.0 321.1L718.8 322.4L718.5 323.8L718.2 325.1L717.9 326.5L717.5 328.0L717.0 329.5L716.5 331.0L715.9 332.6L715.2 334.2L714.5 335.8L713.7 337.5L712.8 339.2L711.9 340.9L711.0 342.5L710.0 344.2L709.0 345.8L708.0 347.4L707.0 348.9L705.9 350.4L704.8 351.8L703.7 353.1L702.6 354.4L701.4 355.7L700.2 356.9L699.0 358.1L697.7 359.3L696.4 360.4L695.1 361.6L693.7 362.7L692.3 363.8L690.9 364.9L689.5 365.9L688.0 367.0L686.5 368.1L685.0 369.1L683.5 370.2L681.8 371.2L680.1 372.2L678.4 373.3L676.6 374.3L674.8 375.3L673.1 376.3L671.5 377.4L669.8 378.4L668.3 379.4L666.8 380.3L665.4 381.2L664.1 382.0L663.0 382.7L661.8 383.4L660.7 384.1L659.7 384.7L658.7 385.2L657.8 385.8L656.9 386.3L656.1 386.7L655.3 387.1L654.6 387.5L653.9 387.9L653.4 388.2L652.8 388.5L652.4 388.7L652.6 389.3L653.1 389.1L653.7 388.8L654.3 388.6L655.0 388.3L655.7 388.1L656.5 387.7L657.4 387.4L658.4 387.0L659.4 386.6L660.4 386.2L661.6 385.7L662.7 385.2L664.0 384.6L665.3 384.0L666.6 383.4L668.1 382.7L669.7 382.0L671.4 381.3L673.1 380.5L674.9 379.6L676.8 378.8L678.6 377.8L680.4 376.7L682.2 375.7L683.9 374.6L685.6 373.5L687.3 372.4L688.9 371.3L690.4 370.2L691.8 369.2L693.3 368.1L694.8 366.9L696.2 365.8L697.6 364.6L699.0 363.5L700.4 362.3L701.7 361.0L703.0 359.7L704.3 358.4L705.6 357.1L706.8 355.7L708.0 354.2L709.1 352.7L710.2 351.2L711.3 349.6L712.4 347.9L713.5 346.2L714.5 344.5L715.4 342.8L716.4 341.0L717.3 339.3L718.1 337.5L718.9 335.8L719.6 334.1L720.2 332.4L720.8 330.7L721.3 329.1L721.7 327.6L722.1 326.1L722.5 324.6L722.7 323.1L722.9 321.6L723.1 320.1L723.2 318.6L723.3 317.1L723.3 315.6L723.3 314.0L723.2 312.4L723.1 310.7L723.0 309.0L722.8 307.2L722.6 305.4L722.4 303.5L722.1 301.6L721.7 299.6L721.3 297.6L720.9 295.6L720.4 293.6L719.9 291.6L719.3 289.5L718.7 287.5L718.1 285.4L717.4 283.4L716.7 281.4L715.9 279.4L715.0 277.4L714.1 275.3L713.2 273.3L712.2 271.3L711.1 269.2L710.0 267.2L708.9 265.2L707.8 263.2L706.6 261.2L705.5 259.2L704.3 257.2L703.1 255.3L701.9 253.4L700.6 251.5L699.3 249.6L698.0 247.8L696.6 245.9L695.2 244.1L693.8 242.3L692.4 240.5L690.9 238.7L689.5 237.0L688.1 235.3L686.8 233.6L685.5 232.0L684.2 230.4L683.0 228.8L681.8 227.2L680.7 225.7L679.6 224.2L678.6 222.7L677.5 221.3L676.5 219.8L675.5 218.4L674.5 217.0L673.5 215.6L672.5 214.3L671.4 213.0L670.4 211.7L669.4 210.4L668.3 209.2L667.2 208.0L666.1 206.8L665.1 205.8L664.0 204.7L662.9 203.7L661.8 202.7L660.8 201.8L659.7 200.8L658.6 199.9L657.6 199.0L656.5 198.1L655.4 197.2L654.3 196.3L653.3 195.5L652.1 194.5L650.9 193.6L649.7 192.6L648.4 191.6L647.1 190.7L645.8 189.7L644.6 188.8L643.3 187.9L642.2 187.1L641.1 186.3L640.1 185.5L639.2 184.9L638.4 184.3L637.8 183.9Z" fill="#000" stroke="#000" stroke-width="0.5"/><path d="M384.2 186.3L365.5 228.8L398.8 228.0Z" stroke-width="3.0"/><path d="M586.5 153.8L584.4 203.6L622.0 204.9Z" stroke-width="3.0"/><ellipse cx="400.5" cy="256.4" rx="9.6" ry="5.6" transform="rotate(-8 400.5 256.4)" fill="#000" stroke="none"/><ellipse cx="561.1" cy="239.2" rx="11" ry="6.2" transform="rotate(12 561.1 239.2)" fill="#000" stroke="none"/><ellipse cx="405.9" cy="291.5" rx="8.8" ry="8.3" transform="rotate(0 405.9 291.5)" fill="#000" stroke="none"/><ellipse cx="563.2" cy="275.5" rx="9.3" ry="7.8" transform="rotate(10 563.2 275.5)" fill="#000" stroke="none"/><path d="M446.5 307C446.5 303 451 302.3 455 302.4C459.5 302.5 463.2 304 463.2 307.6C463.2 311 459.5 313.5 457.6 315.5L454.2 315.5C452 313 446.5 311.5 446.5 307Z" fill="#000" stroke="none"/><path d="M455.6 313.0C455.2 314.1 454.6 317.4 453.5 319.5C452.4 321.6 450.8 323.8 449.0 325.5C447.2 327.2 444.0 328.9 443.0 329.6" stroke-width="4.2"/><path d="M456.6 313.0C457.2 314.1 458.8 317.7 460.5 319.8C462.2 321.9 464.8 324.1 467.0 325.6C469.2 327.1 472.8 328.3 474.0 328.8" stroke-width="4.2"/><path d="M425 322.2C428.5 330.5 437 334.6 447.5 331L450 326C441 329.5 432.5 328 425 322.2Z" fill="#000" stroke="#000" stroke-width="1.6"/><path d="M496.9 322.2C493 330 484 333.6 472 331L469.5 326C478 329 488.5 327.5 496.9 322.2Z" fill="#000" stroke="#000" stroke-width="1.6"/><path d="M445.8 331.0C446.4 331.9 447.6 335.3 449.5 336.6C451.4 337.9 454.7 338.9 457.3 339.0C459.9 339.1 462.8 338.6 465.0 337.4C467.2 336.2 469.3 333.2 470.5 332.0C471.7 330.8 471.8 330.3 472.0 330.0" stroke-width="4.6"/><path d="M344.4 322.0L344.6 322.1L344.8 322.3L345.1 322.5L345.5 322.7L345.8 322.9L346.2 323.1L346.6 323.4L347.0 323.6L347.5 323.8L347.9 323.8L348.4 323.8L348.9 323.9L349.3 323.9L349.8 323.9L350.3 324.0L350.8 324.0L351.3 324.0L351.8 324.0L352.4 324.0L352.9 324.0L353.5 324.0L354.1 324.0L354.7 324.0L355.3 324.0L355.9 324.0L356.5 324.0L357.2 324.0L357.8 324.0L358.5 324.0L359.3 324.0L360.1 324.0L360.9 324.1L361.8 324.1L362.6 324.1L363.5 324.1L364.3 324.1L365.1 324.1L365.9 324.1L366.6 324.1L367.2 324.1L367.7 324.1L368.1 324.1L368.3 322.7L367.9 322.6L367.3 322.5L366.7 322.4L366.1 322.3L365.3 322.1L364.5 322.0L363.7 321.8L362.9 321.7L362.0 321.5L361.2 321.3L360.4 321.2L359.6 321.0L358.8 320.9L358.2 320.8L357.5 320.6L356.9 320.5L356.3 320.4L355.7 320.3L355.1 320.2L354.5 320.0L353.9 319.9L353.4 319.8L352.8 319.7L352.3 319.6L351.7 319.5L351.2 319.4L350.7 319.3L350.2 319.3L349.7 319.2L349.2 319.2L348.7 319.2L348.2 319.1L347.7 319.1L347.2 319.2L346.8 319.4L346.4 319.6L346.0 319.8L345.6 320.0L345.2 320.2L344.9 320.4L344.7 320.5L344.4 320.6Z" fill="#000" stroke="#000" stroke-width="0.5"/><path d="M350.4 337.5L350.7 337.4L351.2 337.4L351.7 337.4L352.2 337.4L352.9 337.3L353.5 337.3L354.2 337.3L354.9 337.2L355.7 337.2L356.4 337.1L357.2 337.1L357.9 337.0L358.6 336.9L359.3 336.9L360.0 336.8L360.7 336.7L361.5 336.6L362.3 336.4L363.1 336.3L363.9 336.1L364.6 335.9L365.4 335.7L366.0 335.4L366.6 334.9L367.1 334.5L367.6 334.1L368.0 333.7L368.3 333.4L368.1 332.6L367.7 332.5L367.1 332.4L366.5 332.3L365.8 332.2L365.1 332.1L364.4 332.2L363.6 332.4L362.9 332.6L362.2 332.8L361.4 333.1L360.7 333.4L360.0 333.7L359.3 333.9L358.7 334.1L358.1 334.3L357.4 334.5L356.7 334.8L356.0 335.0L355.3 335.2L354.6 335.4L353.9 335.5L353.3 335.7L352.6 335.9L352.0 336.1L351.5 336.2L351.0 336.3L350.6 336.4L350.2 336.5Z" fill="#000" stroke="#000" stroke-width="0.5"/><path d="M356.1 355.2L356.5 355.0L357.0 354.9L357.6 354.7L358.2 354.5L358.9 354.3L359.6 354.0L360.3 353.8L361.1 353.5L361.9 353.3L362.8 353.0L363.6 352.7L364.4 352.5L365.2 352.2L365.9 351.9L366.7 351.6L367.4 351.1L368.1 350.5L368.8 350.0L369.6 349.4L370.4 348.8L371.1 348.2L371.8 347.6L372.5 347.1L373.2 346.6L373.8 346.1L374.3 345.7L374.8 345.4L375.1 345.1L374.9 344.5L374.4 344.7L373.9 344.9L373.2 345.1L372.5 345.3L371.7 345.6L370.9 345.9L370.0 346.2L369.1 346.5L368.2 346.8L367.3 347.1L366.4 347.5L365.6 347.8L364.8 348.0L364.1 348.5L363.4 348.9L362.8 349.4L362.1 350.0L361.4 350.5L360.7 351.0L360.1 351.5L359.4 352.0L358.8 352.5L358.2 352.9L357.6 353.3L357.1 353.7L356.6 354.1L356.2 354.4L355.9 354.6Z" fill="#000" stroke="#000" stroke-width="0.5"/><path d="M585.4 308.2L585.9 308.1L586.5 308.1L587.2 308.0L588.0 307.9L588.8 307.8L589.7 307.6L590.7 307.5L591.7 307.4L592.7 307.2L593.8 307.1L594.8 306.8L595.8 306.5L596.8 306.2L597.7 305.8L598.7 305.4L599.8 305.0L600.9 304.6L602.0 304.1L603.1 303.4L604.2 302.8L605.2 302.2L606.3 301.5L607.3 300.9L608.2 300.4L609.1 299.9L609.9 299.4L610.5 299.0L611.0 298.7L610.6 297.5L610.0 297.7L609.2 297.9L608.3 298.1L607.4 298.4L606.3 298.7L605.2 299.0L604.0 299.3L602.8 299.6L601.6 299.9L600.4 300.2L599.3 300.6L598.2 301.0L597.2 301.4L596.3 301.8L595.3 302.1L594.4 302.4L593.4 302.8L592.5 303.2L591.6 303.7L590.7 304.1L589.8 304.6L588.9 305.0L588.1 305.4L587.3 305.8L586.6 306.2L586.0 306.5L585.5 306.8L585.0 307.0Z" fill="#000" stroke="#000" stroke-width="0.5"/><path d="M588.5 322.1L588.9 322.3L589.3 322.5L589.9 322.8L590.5 323.1L591.2 323.4L591.9 323.7L592.6 323.9L593.4 324.0L594.1 324.0L594.9 324.0L595.7 324.0L596.4 324.0L597.2 324.1L597.9 324.1L598.6 324.0L599.2 324.0L599.9 324.0L600.6 324.0L601.3 324.0L602.0 324.0L602.7 324.0L603.4 324.0L604.1 324.0L604.9 324.0L605.6 324.0L606.3 324.0L607.1 324.0L607.9 324.1L608.7 324.1L609.5 324.1L610.4 324.1L611.4 324.1L612.3 324.1L613.3 324.1L614.2 324.2L615.1 324.2L616.0 324.2L616.8 324.2L617.6 324.2L618.3 324.2L618.9 324.2L619.3 324.2L619.5 322.8L619.0 322.7L618.4 322.6L617.8 322.4L617.0 322.3L616.2 322.2L615.3 322.0L614.4 321.8L613.5 321.7L612.6 321.5L611.6 321.3L610.7 321.2L609.8 321.0L608.9 320.9L608.1 320.7L607.4 320.6L606.7 320.5L605.9 320.4L605.2 320.2L604.5 320.1L603.8 320.0L603.1 319.9L602.4 319.8L601.6 319.7L600.9 319.5L600.2 319.4L599.5 319.3L598.8 319.2L598.1 319.1L597.4 319.1L596.6 319.0L595.8 319.0L595.0 319.0L594.2 319.0L593.4 319.0L592.7 319.0L591.9 319.2L591.2 319.5L590.5 319.8L589.9 320.1L589.4 320.3L588.9 320.5L588.5 320.7Z" fill="#000" stroke="#000" stroke-width="0.5"/><path d="M590.3 337.6L590.6 337.8L591.0 338.1L591.3 338.3L591.8 338.6L592.2 339.0L592.7 339.3L593.2 339.7L593.8 340.0L594.4 340.2L595.0 340.4L595.6 340.5L596.1 340.7L596.7 340.8L597.3 341.0L597.8 341.2L598.4 341.3L599.0 341.5L599.6 341.7L600.2 341.8L600.9 342.0L601.5 342.2L602.2 342.4L602.8 342.6L603.5 342.8L604.2 343.0L604.9 343.2L605.6 343.4L606.3 343.6L607.1 343.9L607.9 344.1L608.8 344.4L609.7 344.7L610.6 344.9L611.5 345.2L612.5 345.5L613.3 345.8L614.2 346.1L615.0 346.3L615.7 346.6L616.4 346.8L617.0 347.0L617.4 347.1L618.0 345.7L617.6 345.5L617.0 345.2L616.4 344.9L615.7 344.5L615.0 344.1L614.2 343.7L613.4 343.3L612.5 342.9L611.7 342.4L610.8 342.0L610.0 341.5L609.1 341.1L608.4 340.7L607.7 340.4L607.0 340.0L606.3 339.7L605.7 339.4L605.0 339.0L604.4 338.7L603.7 338.4L603.1 338.1L602.5 337.8L601.8 337.5L601.2 337.2L600.6 336.9L600.0 336.6L599.4 336.4L598.7 336.2L598.1 336.0L597.4 335.8L596.8 335.7L596.1 335.5L595.4 335.4L594.8 335.3L594.1 335.4L593.5 335.5L592.9 335.7L592.3 335.8L591.8 335.9L591.4 336.0L591.0 336.1L590.7 336.2Z" fill="#000" stroke="#000" stroke-width="0.5"/><path d="M672.0 380.9L673.2 381.1L674.8 381.3L676.6 381.6L678.6 381.9L680.8 382.3L683.1 382.7L685.5 382.9L688.1 382.9L690.6 383.0L693.2 383.1L695.7 383.1L698.2 383.2L700.6 383.3L702.9 383.4L705.1 383.6L707.4 383.7L709.7 383.8L712.0 384.0L714.4 384.2L716.7 384.3L719.0 384.5L721.3 384.7L723.5 384.8L725.7 385.0L727.8 385.2L729.8 385.4L731.8 385.6L733.6 385.7L735.3 385.9L736.9 386.1L738.3 386.2L739.7 386.4L741.0 386.6L742.2 386.7L743.4 386.9L744.6 387.1L745.8 387.3L747.0 387.4L748.2 387.6L749.5 387.9L750.9 388.1L752.4 388.3L754.0 388.6L755.6 388.9L757.4 389.2L759.2 389.5L761.0 389.8L762.9 390.1L764.8 390.5L766.6 390.8L768.4 391.2L770.2 391.5L771.9 391.8L773.5 392.1L774.9 392.4L776.3 392.7L777.5 393.0L778.7 393.3L779.8 393.5L780.9 393.8L781.8 394.1L782.8 394.3L783.6 394.6L784.5 394.8L785.2 395.1L785.9 395.3L786.6 395.5L787.1 395.7L787.7 395.8L788.2 396.0L789.2 392.2L788.8 392.1L788.3 391.9L787.7 391.8L787.1 391.6L786.4 391.3L785.6 391.1L784.8 390.9L783.9 390.6L782.9 390.3L781.9 390.0L780.8 389.7L779.6 389.5L778.4 389.2L777.1 388.9L775.7 388.6L774.2 388.3L772.6 388.0L770.9 387.7L769.2 387.3L767.3 387.0L765.5 386.6L763.6 386.3L761.7 386.0L759.9 385.6L758.1 385.3L756.3 385.0L754.6 384.7L753.0 384.5L751.5 384.2L750.2 384.0L748.8 383.8L747.6 383.6L746.4 383.4L745.2 383.2L744.0 383.0L742.7 382.9L741.5 382.7L740.2 382.5L738.8 382.4L737.3 382.2L735.7 382.0L734.0 381.9L732.2 381.7L730.2 381.5L728.2 381.3L726.0 381.1L723.8 381.0L721.6 380.8L719.3 380.6L717.0 380.4L714.6 380.3L712.3 380.1L710.0 379.9L707.6 379.8L705.3 379.7L703.1 379.6L700.8 379.4L698.4 379.3L695.9 379.2L693.3 379.2L690.7 379.1L688.2 379.0L685.6 379.0L683.2 379.0L680.8 379.3L678.6 379.6L676.6 379.8L674.8 380.0L673.3 380.2L672.0 380.3Z" fill="#000" stroke="#000" stroke-width="0.5"/><path d="M788.7 394.1C788.2 390.7 786.7 379.8 785.4 373.4C784.1 367.0 783.2 361.3 781.0 355.9C778.8 350.4 775.9 345.4 772.3 340.7C768.7 336.0 762.5 331.6 759.2 327.6C755.9 323.6 753.6 320.1 752.7 316.7C751.8 313.2 752.3 309.8 753.8 306.9C755.2 304.0 758.3 300.8 761.4 299.2C764.5 297.6 768.3 296.9 772.3 297.1C776.3 297.3 781.0 298.1 785.4 300.3C789.8 302.5 794.5 305.9 798.5 310.1C802.5 314.3 806.7 319.9 809.4 325.4C812.1 330.8 813.7 337.4 814.8 342.8C815.9 348.2 816.4 353.0 815.9 358.1C815.4 363.2 813.8 368.9 811.6 373.4C809.4 377.9 806.6 381.9 802.8 385.3C799.0 388.8 791.1 392.6 788.7 394.1" stroke-width="3.9"/><path d="M803.0 388.5C803.9 387.4 806.6 384.5 808.5 382.0C810.4 379.5 812.8 377.8 814.6 373.4C816.5 369.0 818.8 361.0 819.6 355.9C820.4 350.8 819.8 347.9 819.2 342.8C818.6 337.7 816.5 330.8 815.9 325.4C815.3 319.9 814.8 314.3 815.9 310.1C817.0 305.9 819.6 302.8 822.5 300.3C825.4 297.8 829.8 295.3 833.4 294.9C837.0 294.5 840.7 295.6 844.3 298.1C847.9 300.6 852.3 305.2 855.2 310.1C858.1 315.0 860.6 322.2 861.7 327.6C862.8 333.1 862.8 337.7 861.7 342.8C860.6 347.9 858.5 352.3 855.2 358.1C851.9 363.9 846.8 371.2 842.1 377.7C837.4 384.2 832.2 391.7 826.8 397.3C821.3 402.9 812.3 409.1 809.4 411.5" stroke-width="4.0"/><path d="M775.6 341.7C778.7 341.3 787.9 338.6 794.1 339.3C800.3 340.0 809.5 345.0 812.6 346.1" stroke-width="3.0"/><path d="M784.3 360.3C786.7 359.9 793.2 357.2 798.5 357.6C803.8 358.0 813.0 361.7 815.9 362.5" stroke-width="3.0"/><path d="M787.6 378.8C789.0 378.4 792.8 376.6 796.3 376.6C799.8 376.6 806.3 378.4 808.3 378.8" stroke-width="3.0"/><path d="M822.5 338.5C825.0 339.4 832.8 340.3 837.7 343.9C842.6 347.5 849.5 357.6 851.9 360.3" stroke-width="3.0"/><path d="M819.2 359.2C821.2 360.1 827.4 361.9 831.2 364.6C835.0 367.3 840.3 373.7 842.1 375.5" stroke-width="3.0"/><path d="M813.7 375.5C815.5 376.4 821.5 378.8 824.6 381.0C827.7 383.2 831.0 387.3 832.3 388.6" stroke-width="3.0"/><path d="M733.1 288.3Q738.5 274.5 754.9 273.1" stroke-width="2.7"/><path d="M741.8 294.4Q746 284.5 757.1 281.8" stroke-width="2.7"/><path d="M823.5 272Q834 263.5 846 272" stroke-width="2.7"/><path d="M827.9 281.8Q836.6 275.4 845.3 281.8" stroke-width="2.7"/><path d="M807.4 412.4L807.7 413.1L808.1 414.0L808.6 415.1L809.1 416.2L809.7 417.5L810.3 418.8L811.0 420.2L811.6 421.7L812.3 423.1L812.9 424.6L813.5 426.1L814.1 427.6L814.6 429.0L815.1 430.4L815.6 431.8L816.1 433.2L816.5 434.7L817.0 436.2L817.4 437.6L817.9 439.1L818.3 440.6L818.7 442.1L819.0 443.6L819.4 445.1L819.7 446.5L819.9 448.0L820.1 449.4L820.3 450.7L820.4 452.1L820.5 453.4L820.5 454.8L820.5 456.2L820.5 457.6L820.4 458.9L820.3 460.3L820.2 461.6L820.0 462.9L819.9 464.2L819.7 465.5L819.6 466.7L819.4 467.9L819.2 469.0L819.1 470.0L818.9 471.0L818.8 471.9L818.6 472.8L818.5 473.6L818.3 474.3L818.1 475.0L817.9 475.7L817.7 476.4L817.5 477.1L817.2 477.7L816.8 478.4L816.5 479.1L816.0 479.8L815.5 480.6L815.0 481.3L814.5 482.0L814.0 482.7L813.4 483.4L812.7 484.1L812.0 484.8L811.3 485.6L810.5 486.3L809.7 487.2L808.8 488.0L807.8 488.9L806.7 489.9L805.6 490.9L804.4 492.0L803.2 493.1L801.9 494.3L800.6 495.5L799.2 496.8L797.7 498.1L796.2 499.4L794.7 500.7L793.1 502.0L791.5 503.4L789.8 504.7L788.0 506.0L786.2 507.3L784.4 508.6L782.4 509.8L780.4 511.1L778.1 512.3L775.8 513.6L773.4 514.8L771.0 516.1L768.5 517.4L766.0 518.7L763.5 520.0L761.1 521.2L758.7 522.5L756.4 523.8L754.2 525.2L752.2 526.5L750.3 527.8L748.4 529.0L746.7 530.3L745.0 531.5L743.3 532.8L741.7 534.1L740.1 535.3L738.6 536.6L737.1 537.9L735.7 539.2L734.3 540.5L732.9 541.9L731.6 543.3L730.3 544.7L729.0 546.2L727.7 547.8L726.6 549.4L725.4 551.1L724.4 552.7L723.4 554.4L722.4 556.1L721.5 557.7L720.5 559.3L719.6 560.8L718.7 562.3L717.8 563.7L716.8 565.1L715.9 566.4L714.9 567.6L713.9 568.8L713.0 570.0L712.0 571.1L711.1 572.2L710.2 573.2L709.3 574.2L708.4 575.1L707.4 576.1L706.5 576.9L705.4 577.8L704.4 578.6L703.3 579.5L702.1 580.3L700.8 581.1L699.5 581.9L698.0 582.7L696.5 583.5L695.0 584.3L693.5 585.1L691.9 585.8L690.3 586.4L688.8 587.0L687.2 587.6L685.7 588.0L684.3 588.4L682.9 588.6L681.6 588.8L680.3 588.9L679.0 588.8L677.7 588.7L676.4 588.5L675.0 588.3L673.7 587.9L672.4 587.5L671.2 587.1L670.0 586.6L668.8 586.1L667.8 585.6L666.8 585.0L666.0 584.4L665.3 583.9L664.7 583.4L664.2 582.8L663.7 582.2L663.3 581.6L663.0 580.9L662.7 580.2L662.4 579.5L662.3 578.8L662.1 578.0L662.1 577.2L662.1 576.3L662.1 575.5L662.3 574.5L662.4 573.6L662.7 572.6L663.0 571.6L663.5 570.6L664.0 569.5L664.6 568.4L665.2 567.2L665.9 566.0L666.7 564.7L667.6 563.5L668.5 562.1L669.5 560.8L670.5 559.4L671.6 558.0L672.7 556.6L673.9 555.1L675.2 553.6L676.6 552.0L678.1 550.4L679.6 548.7L681.2 547.0L682.9 545.3L684.6 543.6L686.2 541.8L687.9 540.1L689.5 538.4L691.1 536.7L692.7 535.0L694.2 533.4L695.6 531.7L696.9 530.1L698.3 528.5L699.6 526.9L700.9 525.3L702.1 523.7L703.4 522.2L704.6 520.6L705.9 519.1L707.1 517.6L708.3 516.2L709.5 514.7L710.6 513.2L711.8 511.7L713.0 510.2L714.3 508.6L715.6 507.1L717.0 505.5L718.4 503.9L719.8 502.3L721.2 500.8L722.5 499.4L723.8 498.0L724.9 496.7L726.0 495.5L727.0 494.4L727.8 493.5L728.5 492.7L728.1 492.3L727.3 493.0L726.4 493.8L725.3 494.7L724.0 495.7L722.7 496.9L721.3 498.1L719.8 499.4L718.2 500.7L716.6 502.1L715.0 503.5L713.5 504.9L711.9 506.4L710.4 507.8L709.0 509.1L707.6 510.5L706.2 511.9L704.9 513.3L703.7 514.8L702.4 516.4L701.2 517.9L700.0 519.4L698.7 521.0L697.4 522.6L696.2 524.1L694.9 525.7L693.6 527.3L692.2 528.9L690.8 530.4L689.4 532.0L687.9 533.7L686.3 535.4L684.7 537.1L683.1 538.8L681.4 540.5L679.7 542.2L678.1 544.0L676.4 545.7L674.8 547.4L673.3 549.1L671.9 550.7L670.5 552.3L669.3 553.8L668.1 555.3L667.0 556.8L666.0 558.2L664.9 559.6L664.0 561.0L663.1 562.3L662.2 563.7L661.4 565.0L660.7 566.3L660.0 567.6L659.4 568.8L658.9 570.1L658.5 571.4L658.2 572.6L657.9 573.8L657.8 575.0L657.7 576.2L657.7 577.4L657.8 578.5L657.9 579.6L658.2 580.7L658.5 581.8L659.0 582.8L659.5 583.8L660.1 584.8L660.8 585.7L661.6 586.5L662.5 587.3L663.5 588.0L664.5 588.7L665.7 589.4L666.9 590.1L668.2 590.7L669.6 591.2L671.0 591.7L672.5 592.2L674.1 592.6L675.6 592.9L677.2 593.1L678.8 593.2L680.4 593.3L682.0 593.2L683.6 593.0L685.2 592.7L686.9 592.3L688.6 591.8L690.3 591.2L692.0 590.5L693.7 589.8L695.3 589.0L697.0 588.2L698.6 587.4L700.2 586.5L701.7 585.7L703.1 584.8L704.5 583.9L705.8 583.1L707.1 582.1L708.2 581.2L709.4 580.2L710.4 579.3L711.5 578.2L712.5 577.2L713.5 576.1L714.5 575.0L715.4 573.9L716.4 572.7L717.3 571.6L718.3 570.3L719.3 569.0L720.4 567.7L721.4 566.2L722.4 564.7L723.4 563.1L724.3 561.5L725.2 559.9L726.2 558.3L727.2 556.7L728.1 555.1L729.1 553.5L730.2 552.0L731.2 550.5L732.4 549.0L733.5 547.7L734.8 546.3L736.1 545.0L737.4 543.7L738.7 542.4L740.1 541.2L741.5 539.9L742.9 538.7L744.4 537.5L746.0 536.3L747.6 535.1L749.2 533.9L751.0 532.6L752.8 531.4L754.6 530.1L756.6 528.9L758.6 527.6L760.9 526.4L763.2 525.1L765.6 523.9L768.0 522.6L770.5 521.3L773.0 520.0L775.5 518.7L777.9 517.5L780.3 516.2L782.6 514.9L784.8 513.5L786.8 512.2L788.8 510.9L790.6 509.6L792.4 508.2L794.2 506.8L795.9 505.4L797.5 504.1L799.1 502.7L800.7 501.4L802.1 500.1L803.5 498.8L804.9 497.5L806.2 496.3L807.4 495.2L808.6 494.1L809.7 493.1L810.8 492.1L811.7 491.2L812.7 490.4L813.6 489.5L814.4 488.7L815.2 487.9L816.0 487.1L816.7 486.3L817.4 485.5L818.0 484.7L818.6 483.9L819.2 483.0L819.8 482.2L820.3 481.3L820.8 480.4L821.2 479.6L821.5 478.7L821.9 477.9L822.1 477.0L822.4 476.2L822.6 475.3L822.8 474.4L823.0 473.6L823.1 472.6L823.3 471.7L823.4 470.7L823.6 469.6L823.7 468.5L823.9 467.3L824.1 466.1L824.3 464.8L824.4 463.4L824.6 462.1L824.7 460.6L824.8 459.2L824.9 457.7L824.9 456.3L824.9 454.8L824.9 453.3L824.8 451.8L824.7 450.3L824.5 448.8L824.3 447.2L824.0 445.7L823.7 444.2L823.3 442.6L822.9 441.0L822.5 439.5L822.1 437.9L821.6 436.4L821.2 434.9L820.7 433.4L820.2 431.9L819.8 430.4L819.3 429.0L818.8 427.5L818.2 426.0L817.6 424.5L817.0 422.9L816.3 421.4L815.6 419.9L815.0 418.4L814.3 417.0L813.7 415.6L813.1 414.4L812.6 413.2L812.1 412.2L811.7 411.3L811.4 410.6Z" fill="#000" stroke="#000" stroke-width="0.5"/><path d="M819.7 480.0C820.7 481.3 822.9 485.6 825.6 488.0C828.3 490.4 830.5 491.2 835.8 494.3C841.1 497.4 852.8 502.9 857.3 506.8C861.8 510.7 863.0 514.6 862.7 517.6C862.4 520.6 860.6 523.7 855.5 524.8C850.4 525.9 840.3 524.6 832.2 524.0C824.1 523.4 814.3 523.2 807.1 521.2C799.9 519.2 792.2 513.7 789.2 512.2" stroke-width="3.5"/><path d="M534.5 541.2L535.5 541.4L536.7 541.7L538.2 542.0L539.7 542.3L541.5 542.7L543.3 543.1L545.3 543.3L547.3 543.4L549.4 543.5L551.6 543.6L553.7 543.7L555.8 543.8L557.9 543.9L559.9 543.9L561.9 544.0L564.0 544.1L566.2 544.2L568.3 544.3L570.5 544.4L572.8 544.5L575.0 544.6L577.3 544.7L579.5 544.8L581.7 544.9L583.8 545.0L586.0 545.1L588.0 545.1L590.0 545.1L591.9 545.2L593.7 545.2L595.4 545.2L597.2 545.2L598.8 545.2L600.5 545.2L602.1 545.2L603.7 545.1L605.4 545.1L607.0 545.0L608.7 545.0L610.3 544.9L612.1 544.8L613.8 544.6L615.7 544.5L617.5 544.3L619.3 544.2L621.2 544.0L623.1 543.8L625.0 543.6L626.9 543.4L628.8 543.1L630.7 542.9L632.6 542.6L634.5 542.3L636.5 542.0L638.4 541.7L640.3 541.4L642.3 541.1L644.2 540.8L646.1 540.4L648.1 540.0L650.0 539.7L652.0 539.3L654.0 538.9L655.9 538.4L657.9 538.0L659.9 537.5L661.8 536.9L663.8 536.4L665.8 535.8L667.8 535.2L669.9 534.5L672.1 533.8L674.3 533.0L676.7 532.2L679.0 531.4L681.4 530.5L683.7 529.7L686.0 528.8L688.1 528.1L690.1 527.3L692.0 526.6L693.6 526.0L695.0 525.5L696.2 525.1L696.0 524.5L694.8 524.9L693.4 525.3L691.7 525.7L689.8 526.3L687.7 526.8L685.5 527.5L683.2 528.1L680.8 528.7L678.4 529.4L676.0 530.0L673.6 530.6L671.3 531.2L669.1 531.7L667.0 532.2L665.0 532.6L663.0 533.1L661.0 533.5L659.0 533.8L657.0 534.2L655.1 534.6L653.1 535.0L651.2 535.4L649.3 535.8L647.3 536.2L645.4 536.6L643.5 536.9L641.6 537.3L639.7 537.6L637.8 537.9L635.9 538.2L634.0 538.5L632.1 538.8L630.2 539.0L628.3 539.3L626.4 539.5L624.5 539.7L622.6 539.9L620.8 540.1L619.0 540.3L617.1 540.5L615.3 540.6L613.6 540.8L611.8 540.9L610.1 541.0L608.5 541.1L606.8 541.1L605.2 541.2L603.6 541.2L602.0 541.3L600.4 541.3L598.8 541.3L597.2 541.3L595.5 541.3L593.7 541.3L591.9 541.3L590.0 541.3L588.1 541.2L586.1 541.2L584.0 541.1L581.8 541.0L579.6 540.9L577.4 540.9L575.2 540.8L573.0 540.6L570.7 540.5L568.5 540.4L566.3 540.3L564.2 540.2L562.1 540.1L560.1 540.1L558.1 540.0L556.0 539.9L553.9 539.8L551.7 539.7L549.6 539.6L547.5 539.5L545.5 539.4L543.5 539.5L541.6 539.8L539.8 540.0L538.2 540.2L536.8 540.3L535.5 540.5L534.5 540.6Z" fill="#000" stroke="#000" stroke-width="0.5"/><path d="M410.6 433.8L410.9 434.2L411.4 434.7L411.9 435.2L412.5 435.8L413.2 436.4L413.8 437.0L414.5 437.7L415.1 438.4L415.7 439.1L416.3 439.7L416.7 440.4L417.1 440.9L417.3 441.4L417.4 441.7L417.4 442.0L417.4 442.3L417.3 442.7L417.2 443.2L417.0 443.7L416.8 444.2L416.5 444.7L416.1 445.3L415.7 445.9L415.3 446.5L414.9 447.1L414.5 447.8L414.1 448.4L413.8 449.1L413.5 449.6L413.3 450.0L413.0 450.4L412.7 450.8L412.5 451.1L412.2 451.5L411.8 452.0L411.5 452.5L411.1 453.0L410.7 453.7L410.3 454.4L409.9 455.3L409.5 456.2L409.1 457.3L408.6 458.5L408.1 459.9L407.6 461.4L407.0 463.1L406.4 464.8L405.8 466.6L405.2 468.4L404.6 470.3L404.0 472.1L403.4 474.0L402.9 475.7L402.5 477.4L402.0 479.0L401.7 480.5L401.4 481.8L401.2 483.0L400.9 484.2L400.7 485.3L400.6 486.4L400.5 487.5L400.4 488.5L400.3 489.5L400.3 490.5L400.3 491.5L400.3 492.5L400.4 493.6L400.5 494.6L400.7 495.8L400.9 497.0L401.3 498.3L401.7 499.4L402.1 500.6L402.7 501.7L403.2 502.8L403.7 503.9L404.2 505.0L404.6 506.1L405.0 507.2L405.4 508.3L405.6 509.4L405.8 510.5L405.9 511.7L405.8 513.1L405.7 514.6L405.6 516.1L405.4 517.7L405.2 519.4L404.9 521.1L404.5 522.8L404.1 524.6L403.7 526.2L403.2 527.9L402.7 529.5L402.1 531.0L401.5 532.4L400.9 533.7L400.2 534.9L399.4 536.0L398.5 537.1L397.5 538.2L396.5 539.3L395.4 540.3L394.3 541.3L393.1 542.3L392.0 543.3L390.8 544.2L389.7 545.1L388.6 546.0L387.6 546.9L386.7 547.8L385.9 548.5L385.1 549.2L384.2 549.8L383.4 550.4L382.6 551.0L381.8 551.5L381.1 552.1L380.3 552.6L379.6 553.2L378.9 553.8L378.2 554.5L377.6 555.2L377.1 556.1L376.8 557.0L376.5 557.9L376.3 558.8L376.2 559.7L376.2 560.6L376.3 561.6L376.4 562.6L376.6 563.6L376.9 564.5L377.3 565.5L377.8 566.4L378.3 567.3L379.0 568.1L379.7 568.9L380.5 569.6L381.4 570.2L382.4 570.7L383.4 571.3L384.6 571.9L385.8 572.4L387.1 572.8L388.4 573.3L389.8 573.6L391.2 574.0L392.7 574.2L394.2 574.3L395.7 574.4L397.2 574.3L398.7 574.1L400.2 573.8L401.7 573.4L403.3 573.0L404.9 572.4L406.5 571.8L408.1 571.0L409.7 570.3L411.3 569.4L412.9 568.5L414.5 567.5L416.0 566.5L417.6 565.4L419.0 564.3L420.5 563.2L421.9 562.0L423.2 560.7L424.6 559.3L426.0 557.8L427.3 556.3L428.6 554.8L429.9 553.2L431.2 551.5L432.4 549.9L433.5 548.2L434.5 546.6L435.5 544.9L436.4 543.2L437.2 541.6L438.0 540.0L438.7 538.3L439.3 536.5L439.9 534.7L440.5 532.9L440.9 531.1L441.4 529.4L441.8 527.7L442.1 526.1L442.4 524.6L442.7 523.2L443.0 522.0L443.2 520.9L443.5 520.1L442.9 519.9L442.6 520.8L442.3 521.8L441.9 523.0L441.4 524.3L440.9 525.8L440.4 527.3L439.8 528.9L439.2 530.6L438.5 532.3L437.8 533.9L437.1 535.6L436.3 537.2L435.5 538.7L434.6 540.2L433.6 541.6L432.6 543.0L431.5 544.5L430.3 546.1L429.2 547.6L428.1 549.2L426.9 550.7L425.6 552.3L424.4 553.8L423.1 555.2L421.8 556.6L420.5 557.9L419.2 559.1L417.9 560.2L416.6 561.3L415.3 562.3L413.8 563.3L412.4 564.2L410.9 565.1L409.4 566.0L407.9 566.8L406.4 567.5L404.9 568.2L403.5 568.7L402.0 569.3L400.7 569.7L399.3 570.0L398.1 570.3L396.9 570.4L395.7 570.5L394.4 570.4L393.2 570.3L391.9 570.1L390.7 569.9L389.5 569.5L388.3 569.2L387.2 568.7L386.2 568.3L385.2 567.8L384.3 567.4L383.5 566.9L382.9 566.4L382.4 566.0L381.9 565.5L381.5 565.0L381.2 564.5L380.9 563.9L380.6 563.2L380.4 562.6L380.3 561.9L380.2 561.2L380.1 560.6L380.1 559.9L380.2 559.3L380.3 558.7L380.4 558.2L380.6 557.8L380.8 557.5L381.2 557.1L381.6 556.6L382.1 556.2L382.7 555.7L383.3 555.2L384.1 554.7L384.9 554.2L385.7 553.6L386.6 552.9L387.5 552.2L388.4 551.5L389.3 550.6L390.2 549.8L391.2 549.0L392.2 548.1L393.3 547.2L394.5 546.3L395.6 545.3L396.8 544.3L398.0 543.2L399.2 542.1L400.4 540.9L401.5 539.6L402.5 538.3L403.5 537.0L404.3 535.5L405.1 534.0L405.7 532.4L406.4 530.8L406.9 529.0L407.5 527.3L407.9 525.5L408.3 523.7L408.7 521.8L409.0 520.0L409.3 518.3L409.5 516.5L409.6 514.8L409.7 513.2L409.7 511.7L409.7 510.2L409.5 508.7L409.1 507.3L408.7 505.9L408.3 504.6L407.8 503.4L407.2 502.3L406.7 501.1L406.2 500.1L405.7 499.0L405.3 498.0L405.0 497.1L404.7 496.1L404.5 495.2L404.4 494.2L404.3 493.2L404.2 492.3L404.2 491.4L404.2 490.5L404.2 489.6L404.3 488.8L404.3 487.9L404.5 486.9L404.6 485.9L404.8 484.9L405.0 483.8L405.2 482.6L405.5 481.3L405.8 480.0L406.2 478.4L406.7 476.8L407.2 475.1L407.7 473.3L408.3 471.5L408.9 469.6L409.5 467.8L410.1 466.0L410.7 464.3L411.2 462.7L411.8 461.2L412.3 459.9L412.7 458.7L413.1 457.7L413.5 456.9L413.8 456.2L414.1 455.6L414.4 455.1L414.7 454.7L415.0 454.2L415.3 453.9L415.6 453.5L415.9 453.1L416.2 452.6L416.6 452.1L416.9 451.5L417.2 450.9L417.5 450.4L417.8 449.8L418.2 449.2L418.6 448.6L419.0 448.0L419.4 447.4L419.8 446.7L420.2 446.0L420.6 445.2L420.9 444.5L421.1 443.6L421.3 442.8L421.3 441.9L421.2 440.9L420.9 439.9L420.5 439.0L420.0 438.2L419.4 437.3L418.7 436.5L418.0 435.8L417.3 435.0L416.6 434.3L415.9 433.6L415.2 433.0L414.6 432.4L414.1 431.9L413.7 431.5L413.4 431.2Z" fill="#000" stroke="#000" stroke-width="0.5"/><path d="M410 430.2C418 431.5 422 438 419.8 444L415 450C416 441 414 436 409 432Z" fill="#000" stroke="#000" stroke-width="1.5"/><path d="M431.4 488.9L431.8 490.1L432.3 491.5L432.8 493.2L433.4 495.2L434.0 497.3L434.7 499.5L435.5 501.8L436.3 504.2L437.1 506.6L438.0 509.0L439.1 511.2L440.2 513.3L441.4 515.3L442.7 517.1L444.0 518.7L445.4 520.3L446.8 521.8L448.4 523.2L449.9 524.6L451.5 525.9L453.1 527.2L454.7 528.3L456.4 529.5L458.0 530.6L459.6 531.6L461.1 532.6L462.6 533.5L464.1 534.3L465.6 535.2L467.2 535.9L468.9 536.6L470.5 537.2L472.1 537.7L473.7 538.2L475.3 538.7L476.8 539.1L478.2 539.4L479.5 539.7L480.7 540.0L481.7 540.3L482.6 540.5L483.3 540.7L484.5 536.9L483.7 536.6L482.7 536.4L481.6 536.1L480.4 535.8L479.1 535.5L477.8 535.2L476.3 534.8L474.8 534.4L473.3 533.9L471.8 533.4L470.3 532.9L468.9 532.3L467.4 531.6L466.1 530.9L464.7 530.0L463.2 529.1L461.7 528.2L460.2 527.2L458.6 526.2L457.1 525.1L455.5 524.0L454.0 522.8L452.5 521.5L451.1 520.3L449.7 518.9L448.3 517.6L447.1 516.1L445.9 514.7L444.8 513.1L443.7 511.3L442.6 509.4L441.5 507.3L440.2 505.2L439.1 503.0L437.9 500.8L436.8 498.6L435.8 496.6L434.9 494.6L434.0 492.8L433.2 491.2L432.5 489.8L432.0 488.7Z" fill="#000" stroke="#000" stroke-width="0.5"/><path d="M488.8 506.5L488.7 507.6L488.7 508.9L488.6 510.5L488.6 512.2L488.5 514.2L488.4 516.2L488.3 518.3L488.2 520.4L488.0 522.6L487.8 524.7L487.6 526.8L487.4 528.8L487.2 530.6L487.0 532.3L486.8 533.9L486.5 535.4L486.1 536.9L485.8 538.4L485.4 539.8L485.0 541.2L484.5 542.6L484.0 544.0L483.5 545.4L482.9 546.7L482.2 548.1L481.5 549.5L480.8 550.9L480.0 552.3L479.1 553.8L478.1 555.3L477.0 556.9L475.9 558.4L474.7 560.0L473.4 561.6L472.1 563.2L470.8 564.8L469.5 566.3L468.2 567.8L466.9 569.2L465.7 570.5L464.6 571.7L463.6 572.8L462.6 573.8L461.7 574.6L460.8 575.3L460.0 576.0L459.1 576.5L458.2 577.1L457.3 577.6L456.5 578.1L455.6 578.7L454.8 579.3L454.0 580.0L453.2 580.7L452.4 581.6L451.8 582.5L451.3 583.5L450.8 584.5L450.3 585.5L450.0 586.6L449.6 587.7L449.3 588.8L449.1 589.9L448.9 591.1L448.8 592.2L448.8 593.4L448.9 594.5L449.0 595.7L449.3 596.8L449.6 597.9L450.1 599.0L450.6 600.0L451.2 601.1L451.8 602.2L452.6 603.3L453.4 604.4L454.3 605.4L455.3 606.4L456.3 607.4L457.4 608.2L458.6 609.0L459.8 609.7L461.1 610.3L462.5 610.7L463.8 611.0L465.2 611.3L466.7 611.4L468.2 611.5L469.7 611.5L471.4 611.4L473.0 611.2L474.7 610.9L476.4 610.6L478.1 610.1L479.8 609.6L481.5 609.0L483.2 608.2L484.9 607.3L486.6 606.3L488.3 605.2L490.0 604.0L491.8 602.6L493.5 601.1L495.3 599.6L497.0 598.0L498.8 596.3L500.5 594.6L502.2 592.9L503.8 591.2L505.4 589.5L506.9 587.7L508.4 586.1L509.8 584.4L511.2 582.6L512.6 580.8L513.9 579.0L515.2 577.1L516.5 575.2L517.7 573.3L518.9 571.5L520.0 569.6L521.2 567.8L522.3 565.9L523.3 564.2L524.3 562.4L525.3 560.8L526.3 559.1L527.2 557.5L528.1 556.0L529.0 554.4L529.8 552.9L530.6 551.4L531.4 549.9L532.1 548.4L532.7 546.9L533.3 545.3L533.8 543.8L534.4 542.3L534.9 540.8L535.3 539.3L535.8 537.7L536.1 536.1L536.5 534.4L536.8 532.7L537.0 531.0L537.3 529.4L537.5 527.7L537.6 526.2L537.8 524.7L537.9 523.3L538.1 522.0L538.2 520.8L538.3 519.9L538.4 519.1L537.8 518.9L537.6 519.7L537.4 520.7L537.1 521.8L536.8 523.1L536.5 524.5L536.2 525.9L535.8 527.4L535.5 529.0L535.0 530.6L534.6 532.2L534.1 533.8L533.6 535.4L533.0 536.9L532.5 538.3L531.9 539.7L531.2 541.1L530.5 542.4L529.8 543.8L529.1 545.2L528.3 546.6L527.6 548.0L526.9 549.4L526.1 550.9L525.3 552.4L524.4 553.9L523.5 555.4L522.6 557.0L521.7 558.6L520.7 560.3L519.7 562.0L518.6 563.8L517.6 565.6L516.5 567.4L515.3 569.2L514.2 571.1L513.0 572.9L511.7 574.7L510.5 576.5L509.2 578.3L507.9 580.0L506.6 581.7L505.2 583.3L503.8 585.0L502.3 586.6L500.7 588.3L499.1 590.0L497.5 591.7L495.8 593.3L494.2 594.9L492.5 596.5L490.8 597.9L489.2 599.3L487.5 600.6L485.9 601.8L484.4 602.8L482.9 603.7L481.4 604.4L479.9 605.1L478.4 605.6L476.9 606.1L475.4 606.5L473.9 606.8L472.5 607.0L471.0 607.2L469.6 607.3L468.3 607.3L467.0 607.2L465.7 607.1L464.6 606.9L463.5 606.7L462.6 606.4L461.7 606.0L460.8 605.5L459.9 604.9L459.0 604.2L458.2 603.4L457.4 602.6L456.7 601.7L456.0 600.8L455.4 599.9L454.8 599.0L454.3 598.1L453.9 597.3L453.6 596.5L453.3 595.7L453.2 595.0L453.1 594.2L453.0 593.3L453.0 592.4L453.1 591.5L453.2 590.6L453.4 589.7L453.7 588.8L453.9 587.9L454.3 587.0L454.6 586.2L455.0 585.4L455.4 584.7L455.8 584.1L456.2 583.6L456.7 583.1L457.3 582.6L458.0 582.2L458.7 581.7L459.5 581.2L460.4 580.7L461.4 580.1L462.4 579.4L463.4 578.7L464.5 577.8L465.5 576.8L466.6 575.8L467.7 574.6L468.8 573.3L470.1 572.0L471.3 570.6L472.7 569.1L474.0 567.5L475.3 565.9L476.7 564.3L478.0 562.6L479.2 561.0L480.5 559.3L481.6 557.7L482.7 556.0L483.6 554.5L484.5 552.9L485.3 551.4L486.0 549.9L486.7 548.5L487.3 547.0L487.9 545.5L488.5 544.0L489.0 542.5L489.4 541.0L489.9 539.4L490.2 537.9L490.6 536.3L490.9 534.6L491.2 532.9L491.4 531.1L491.6 529.1L491.6 527.0L491.4 524.8L491.3 522.6L491.0 520.4L490.8 518.2L490.6 516.1L490.3 514.1L490.1 512.2L489.9 510.4L489.7 508.9L489.5 507.6L489.4 506.5Z" fill="#000" stroke="#000" stroke-width="0.5"/></g><rect x="342.9" y="231.5" width="278.5" height="125" fill="none" stroke="#666" stroke-width="0.9"/><rect x="340.4" y="229.0" width="5" height="5" fill="#fff" stroke="#222" stroke-width="1"/><rect x="340.4" y="291.5" width="5" height="5" fill="#fff" stroke="#222" stroke-width="1"/><rect x="340.4" y="354.0" width="5" height="5" fill="#fff" stroke="#222" stroke-width="1"/><rect x="479.5" y="229.0" width="5" height="5" fill="#fff" stroke="#222" stroke-width="1"/><rect x="479.5" y="354.0" width="5" height="5" fill="#fff" stroke="#222" stroke-width="1"/><rect x="618.9" y="229.0" width="5" height="5" fill="#fff" stroke="#222" stroke-width="1"/><rect x="618.9" y="291.5" width="5" height="5" fill="#fff" stroke="#222" stroke-width="1"/><rect x="618.9" y="354.0" width="5" height="5" fill="#fff" stroke="#222" stroke-width="1"/><path d="M643.6 271.5A5.4 5.4 0 1 1 649.2 271.5" fill="none" stroke="#222" stroke-width="1"/><circle cx="643.4" cy="271.6" r="1.15" fill="#111"/><circle cx="649.5" cy="271.6" r="1.15" fill="#111"/></svg>
<div style="left:321.8px;top:212.3px;width:42.6px;height:42.2px;border:6px solid #fb0208;border-radius:2px;"></div>
<div style="left:627px;top:246.8px;width:42px;height:40.2px;border:6px solid #fb0208;border-radius:2px;"></div>
<span class="t" style="left:305px;top:182px;font-size:22px;line-height:24px;color:#ee1c24;transform:scaleX(1.0413);">(1)</span>
<span class="t" style="left:670.5px;top:255.5px;font-size:23px;line-height:25px;color:#ee1c24;transform:scaleX(0.9778);">(2)</span>
<div style="left:240px;top:658px;width:706px;height:1.5px;background:#1e3850;"></div>
<div style="left:240px;top:659.5px;width:702.5px;height:54.5px;background:#569ed6;"></div>
<span class="t" style="left:246px;top:669.5px;font-size:12px;line-height:14px;color:#d4e6f6;transform:scaleX(0.9331);font-weight:300;">画像の変形</span>
<div style="left:581.5px;top:666px;width:54px;height:18.5px;background:linear-gradient(#585858,#444);border-radius:3px;border:1px solid #3a4a5a;"></div>
<span class="t" style="left:585.5px;top:667.5px;font-size:12px;line-height:14px;color:#fff;transform:scaleX(0.958);">左右反転</span>
<div style="left:647.5px;top:672px;width:7px;height:7px;background:#1a1a1a;border:1px solid #dde;"></div>
<span class="t" style="left:660.5px;top:667.5px;font-size:12px;line-height:14px;color:#e8f2fb;transform:scaleX(0.9372);font-weight:300;">自由変形</span>
<svg style="left:719.5px;top:671.5px;" width="8" height="8" viewBox="0 0 8 8"><rect x="0.5" y="0.5" width="7" height="7" fill="#eee" stroke="#333" stroke-width="1"/><path d="M2.3 2.3L5.7 5.7M5.7 2.3L2.3 5.7" stroke="#222" stroke-width="1.1"/></svg>
<span class="t" style="left:731.5px;top:667.5px;font-size:12px;line-height:14px;color:#e8f2fb;transform:scaleX(0.8585);font-weight:300;">パース補正</span>
<div style="left:794.5px;top:666.5px;width:141.5px;height:17.5px;background:linear-gradient(#585858,#444);border-radius:3px;border:1px solid #3a4a5a;"></div>
<span class="t" style="left:797.5px;top:667.5px;font-size:12px;line-height:14px;color:#fff;transform:scaleX(0.7403);font-weight:300;">バイキュービック(シャープ)</span>
<svg style="left:927px;top:672.5px;" width="8" height="6" viewBox="0 0 8 6"><path d="M1.5 1.5L4 4.5L6.5 1.5Z" fill="#bbb"/></svg>
<div style="left:780.5px;top:688.5px;width:69.5px;height:18px;background:linear-gradient(#585858,#444);border-radius:3px;border:1px solid #3a4a5a;"></div>
<span class="t" style="left:783px;top:689.5px;font-size:12px;line-height:14px;color:#fff;transform:scaleX(0.8998);">中心を固定</span>
<svg style="left:839.5px;top:694.5px;" width="8" height="6" viewBox="0 0 8 6"><path d="M1.5 1.5L4 4.5L6.5 1.5Z" fill="#bbb"/></svg>
<div style="left:856.5px;top:688.5px;width:20.5px;height:18px;background:linear-gradient(#585858,#444);border-radius:3px;border:1px solid #3a4a5a;"></div>
<span class="t" style="left:859.5px;top:690px;font-size:11.5px;line-height:13.5px;color:#fff;transform:scaleX(0.9522);">Ok</span>
<div style="left:883.5px;top:688.5px;width:52px;height:18px;background:linear-gradient(#585858,#444);border-radius:3px;border:1px solid #3a4a5a;"></div>
<span class="t" style="left:887px;top:689.5px;font-size:12px;line-height:14px;color:#fff;transform:scaleX(0.7331);font-weight:300;">キャンセル</span>
<div style="left:946px;top:73px;width:206px;height:642px;background:#262626;"></div>
<div style="left:946px;top:74px;width:205px;height:1px;background:#27496b;"></div>
<div style="left:946px;top:75px;width:205px;height:15px;background:linear-gradient(#3a3a3a,#303030);"></div>
<span class="t" style="left:1011.5px;top:75.5px;font-size:12px;line-height:14px;color:#c8c8c8;transform:scaleX(0.7221);font-weight:300;">ナビゲーター</span>
<svg style="left:1128px;top:78.5px;" width="8" height="8" viewBox="0 0 8 8"><path d="M3.6 2.4H1.5V6.5H5.6V4.4" fill="none" stroke="#b4b4b4" stroke-width="1"/><path d="M4 4L6.6 1.4M4.6 1.2H6.8V3.4" fill="none" stroke="#b4b4b4" stroke-width="1"/></svg>
<svg style="left:1139.5px;top:78px;" width="9" height="9" viewBox="0 0 9 9"><path d="M2 2L7 7M7 2L2 7" stroke="#ddd" stroke-width="1.8"/></svg>
<div style="left:946px;top:91px;width:205px;height:76.5px;background:#484848;"></div>
<div style="left:946px;top:91px;width:205px;height:23.5px;background:#2c2c2c;"></div>
<div style="left:949px;top:92.5px;width:20.5px;height:20.5px;background:#444;border-radius:2px;"></div>
<div style="left:976px;top:92.5px;width:20.5px;height:20.5px;background:#444;border-radius:2px;"></div>
<div style="left:998px;top:92.5px;width:20.5px;height:20.5px;background:#444;border-radius:2px;"></div>
<div style="left:1020px;top:92.5px;width:20.5px;height:20.5px;background:#444;border-radius:2px;"></div>
<div style="left:1047px;top:92.5px;width:20.5px;height:20.5px;background:#444;border-radius:2px;"></div>
<div style="left:1069px;top:92.5px;width:20.5px;height:20.5px;background:#1e1e1e;border-radius:2px;"></div>
<div style="left:1092px;top:92.5px;width:20.5px;height:20.5px;background:#444;border-radius:2px;"></div>
<div style="left:1119px;top:92.5px;width:20.5px;height:20.5px;background:#444;border-radius:2px;"></div>
<div style="left:972.5px;top:96px;width:1px;height:13px;background:#555;"></div>
<div style="left:1043.5px;top:96px;width:1px;height:13px;background:#555;"></div>
<div style="left:1115.5px;top:96px;width:1px;height:13px;background:#555;"></div>
<svg style="left:949px;top:92.5px;" width="20.5" height="20.5" viewBox="0 0 20.5 20.5"><circle cx="8.6" cy="8.6" r="4.6" fill="none" stroke="#f0f0f0" stroke-width="1.5"/><path d="M12 12L16.5 16.5" stroke="#f0f0f0" stroke-width="2.2" stroke-linecap="round"/><path d="M7.6 7.2L8.9 6.2V11" stroke="#f0f0f0" stroke-width="1.2" fill="none"/></svg>
<svg style="left:976px;top:92.5px;" width="20.5" height="20.5" viewBox="0 0 20.5 20.5"><circle cx="8.6" cy="8.6" r="4.6" fill="none" stroke="#f0f0f0" stroke-width="1.5"/><path d="M12 12L16.5 16.5" stroke="#f0f0f0" stroke-width="2.2" stroke-linecap="round"/><path d="M6.2 8.6H11" stroke="#f0f0f0" stroke-width="1.4"/><path d="M8.6 6.2V11" stroke="#f0f0f0" stroke-width="1.4"/></svg>
<svg style="left:1020px;top:92.5px;" width="20.5" height="20.5" viewBox="0 0 20.5 20.5"><circle cx="8.6" cy="8.6" r="4.6" fill="none" stroke="#f0f0f0" stroke-width="1.5"/><path d="M12 12L16.5 16.5" stroke="#f0f0f0" stroke-width="2.2" stroke-linecap="round"/><path d="M6.2 8.6H11" stroke="#f0f0f0" stroke-width="1.4"/></svg>
<svg style="left:998px;top:92.5px;" width="20.5" height="20.5" viewBox="0 0 20.5 20.5"><rect x="3.5" y="4.5" width="13.5" height="11.5" fill="none" stroke="#f0f0f0" stroke-width="1.2"/><path d="M5.5 9V6.5H8M12.5 6.5H15V9M15 11.5V14H12.5M8 14H5.5V11.5" fill="none" stroke="#f0f0f0" stroke-width="1.3"/></svg>
<svg style="left:1047px;top:92.5px;" width="20.5" height="20.5" viewBox="0 0 20.5 20.5"><path d="M6.2 5.2A6.3 6.3 0 1 1 4 10.5" fill="none" stroke="#f0f0f0" stroke-width="1.5"/><path d="M3.2 3.8L7.8 4L6.2 7.8Z" fill="#f0f0f0"/><rect x="6.8" y="7.6" width="7.4" height="5.6" fill="#f0f0f0" transform="rotate(-18 10.5 10.4)"/></svg>
<svg style="left:1069px;top:92.5px;" width="20.5" height="20.5" viewBox="0 0 20.5 20.5"><rect x="5.6" y="6" width="9.4" height="8.6" fill="#f0f0f0"/><path d="M3 5.5V3.2H5.3M15.3 3.2H17.6V5.5M17.6 15.2V17.5H15.3M5.3 17.5H3V15.2M3.2 3.4L5.4 5.6M17.4 3.4L15.2 5.6M17.4 17.3L15.2 15.1M3.2 17.3L5.4 15.1" fill="none" stroke="#f0f0f0" stroke-width="1.2"/></svg>
<svg style="left:1092px;top:92.5px;" width="20.5" height="20.5" viewBox="0 0 20.5 20.5"><path d="M14.3 5.2A6.3 6.3 0 1 0 16.5 10.5" fill="none" stroke="#f0f0f0" stroke-width="1.5"/><path d="M17.3 3.8L12.7 4L14.3 7.8Z" fill="#f0f0f0"/><rect x="6.3" y="7.6" width="7.4" height="5.6" fill="#f0f0f0" transform="rotate(18 10 10.4)"/></svg>
<svg style="left:1119px;top:92.5px;" width="20.5" height="20.5" viewBox="0 0 20.5 20.5"><rect x="3.6" y="8.4" width="5.6" height="8.4" fill="#f0f0f0"/><rect x="11.6" y="8.9" width="4.8" height="7.4" fill="none" stroke="#f0f0f0" stroke-width="1.2"/><path d="M6.2 6.5C7 2.8 13.5 2.8 14.2 6" fill="none" stroke="#f0f0f0" stroke-width="1.2"/><path d="M12.6 5.2L14.4 7.4L15.8 4.8Z" fill="#f0f0f0"/></svg>
<div style="left:1017px;top:116px;width:64px;height:51px;background:#fff;border:1px solid #d8202a;"></div>
<svg style="left:1020px;top:119px;" width="58" height="46" viewBox="247 95 675 541"><g fill="none" stroke="#444" stroke-width="8" stroke-linecap="round" stroke-linejoin="round"><path d="M386 159L352 230L313 324L308 360L336 406L390 430L444 429M386 159L434 229L568 207L585 127L637 186L681 230L715 282L719 330L688 370L653 389M675 381L789 394C780 340 752 330 753 307C765 290 800 300 815 343C818 370 800 390 789 394M809 384C825 350 810 320 822 300C845 285 862 320 862 343C850 380 826 397 809 411C825 450 822 480 807 492L753 528C720 560 710 590 682 591C655 585 665 560 692 532L728 492M820 480C840 500 865 510 862 518C850 528 810 522 789 512M535 541C600 545 660 537 696 525M411 432C420 445 404 480 403 495C410 515 400 540 379 558C380 572 400 574 419 562C436 541 443 525 443 520M432 489C445 520 465 533 484 539M489 506C490 545 470 570 454 584C448 600 465 610 484 605C510 585 530 550 538 519"/></g></svg>
<div style="left:946px;top:167.5px;width:205px;height:4px;background:#262626;"></div>
<div style="left:946px;top:171px;width:205px;height:1px;background:#27496b;"></div>
<div style="left:946px;top:172px;width:205px;height:15px;background:linear-gradient(#3a3a3a,#303030);"></div>
<span class="t" style="left:1019.0px;top:172.5px;font-size:12px;line-height:14px;color:#c8c8c8;transform:scaleX(0.7766);font-weight:300;">レイヤー</span>
<svg style="left:1128px;top:175.5px;" width="8" height="8" viewBox="0 0 8 8"><path d="M3.6 2.4H1.5V6.5H5.6V4.4" fill="none" stroke="#b4b4b4" stroke-width="1"/><path d="M4 4L6.6 1.4M4.6 1.2H6.8V3.4" fill="none" stroke="#b4b4b4" stroke-width="1"/></svg>
<svg style="left:1139.5px;top:175px;" width="9" height="9" viewBox="0 0 9 9"><path d="M2 2L7 7M7 2L2 7" stroke="#ddd" stroke-width="1.8"/></svg>
<div style="left:946px;top:188px;width:205px;height:66px;background:#2a2a2a;"></div>
<span class="t" style="left:950px;top:192.5px;font-size:12px;line-height:14px;color:#e0e0e0;transform:scaleX(0.9372);font-weight:300;">不透明度</span>
<div style="left:1002px;top:192px;width:113.5px;height:14.5px;background:linear-gradient(to right,#7cc0f4,#4a96d6);"></div>
<span class="t" style="left:1121.5px;top:192.5px;font-size:11.5px;line-height:13.5px;color:#e0e0e0;transform:scaleX(0.7973);">100 %</span>
<span class="t" style="left:950px;top:214px;font-size:12px;line-height:14px;color:#e0e0e0;transform:scaleX(0.6873);font-weight:300;">ブレンド</span>
<div style="left:1004px;top:213.5px;width:143px;height:15.5px;background:#454545;border-radius:2px;"></div>
<span class="t" style="left:1006.5px;top:214px;font-size:12px;line-height:14px;color:#e0e0e0;transform:scaleX(0.8744);font-weight:300;">通常</span>
<svg style="left:1138px;top:219px;" width="8" height="6" viewBox="0 0 8 6"><path d="M1.5 1.5L4 4.5L6.5 1.5Z" fill="#aaa"/></svg>
<svg style="left:952px;top:239.5px;" width="8" height="8" viewBox="0 0 8 8"><rect x="0.5" y="0.5" width="7" height="7" fill="none" stroke="#ccc" stroke-width="1"/></svg>
<span class="t" style="left:964.5px;top:236.5px;font-size:12px;line-height:14px;color:#e0e0e0;transform:scaleX(0.9165);font-weight:300;">透明度を保護</span>
<svg style="left:1041px;top:239.5px;" width="8" height="8" viewBox="0 0 8 8"><rect x="0.5" y="0.5" width="7" height="7" fill="none" stroke="#ccc" stroke-width="1"/></svg>
<span class="t" style="left:1053.5px;top:236.5px;font-size:12px;line-height:14px;color:#e0e0e0;transform:scaleX(0.6665);font-weight:300;">クリッピング</span>
<svg style="left:1110px;top:239.5px;" width="8" height="8" viewBox="0 0 8 8"><rect x="0.5" y="0.5" width="7" height="7" fill="none" stroke="#ccc" stroke-width="1"/></svg>
<span class="t" style="left:1122.5px;top:236.5px;font-size:12px;line-height:14px;color:#e0e0e0;transform:scaleX(0.6664);font-weight:300;">ロック</span>
<div style="left:948px;top:254px;width:203px;height:252px;background:#484848;"></div>
<div style="left:948px;top:254px;width:188.5px;height:37.7px;background:#4d9bd6;"></div>
<div style="left:948px;top:254px;width:18px;height:37.7px;background:#5a5a5a;"></div>
<div style="left:948px;top:293px;width:188.5px;height:36.5px;background:#565656;"></div>
<div style="left:948px;top:291.7px;width:188.5px;height:1.3px;background:#3c3c3c;"></div>
<svg style="left:951px;top:266.6px;" width="12" height="12" viewBox="0 0 12 12"><circle cx="6" cy="6" r="4.7" fill="#d6d6d6"/><circle cx="6" cy="6" r="1.6" fill="#b8b8b8"/></svg>
<svg style="left:951px;top:304.8px;" width="12" height="12" viewBox="0 0 12 12"><circle cx="6" cy="6" r="4.7" fill="#d6d6d6"/><circle cx="6" cy="6" r="1.6" fill="#b8b8b8"/></svg>
<div style="left:980px;top:259.5px;width:34px;height:27px;background:#fff;background-image:conic-gradient(#f7e4d6 25%,#fff 0 50%,#f7e4d6 0 75%,#fff 0);background-size:6px 6px;"></div>
<div style="left:980px;top:297.5px;width:34px;height:27px;background:#fff;background-image:conic-gradient(#e4e4e4 25%,#fff 0 50%,#e4e4e4 0 75%,#fff 0);background-size:6px 6px;"></div>
<svg style="left:981px;top:298.5px;" width="32" height="25" viewBox="247 95 675 541"><g fill="none" stroke="#666" stroke-width="9" stroke-linecap="round" stroke-linejoin="round"><path d="M386 159L352 230L313 324L308 360L336 406L390 430L444 429M386 159L434 229L568 207L585 127L637 186L681 230L715 282L719 330L688 370L653 389M675 381L789 394C780 340 752 330 753 307C765 290 800 300 815 343C818 370 800 390 789 394M809 384C825 350 810 320 822 300C845 285 862 320 862 343C850 380 826 397 809 411C825 450 822 480 807 492L753 528C720 560 710 590 682 591C655 585 665 560 692 532L728 492M820 480C840 500 865 510 862 518C850 528 810 522 789 512M535 541C600 545 660 537 696 525M411 432C420 445 404 480 403 495C410 515 400 540 379 558C380 572 400 574 419 562C436 541 443 525 443 520M432 489C445 520 465 533 484 539M489 506C490 545 470 570 454 584C448 600 465 610 484 605C510 585 530 550 538 519"/></g></svg>
<span class="t" style="left:1030.5px;top:265px;font-size:12.5px;line-height:14.5px;color:#fff;transform:scaleX(1.0692);">線画(顔)</span>
<span class="t" style="left:1030.5px;top:303px;font-size:12.5px;line-height:14.5px;color:#e0e0e0;transform:scaleX(1.0165);">線画(顔以外)</span>
<svg style="left:1116.5px;top:264.5px;" width="18" height="18" viewBox="0 0 18 18"><g stroke="#fff" stroke-width="3.2"><path d="M9 0.8V17.2M0.8 9H17.2M3.2 3.2L14.8 14.8M14.8 3.2L3.2 14.8"/></g><circle cx="9" cy="9" r="5.6" fill="#fff"/><circle cx="9" cy="9" r="2.2" fill="#4d9bd6"/></svg>
<div style="left:1137px;top:254px;width:11px;height:252px;background:#2e2e2e;"></div>
<svg style="left:1138.5px;top:255.5px;" width="8" height="6" viewBox="0 0 8 6"><path d="M4 0.5L7.5 5.5H0.5Z" fill="#bbb"/></svg>
<svg style="left:1138.5px;top:501.5px;" width="8" height="6" viewBox="0 0 8 6"><path d="M4 5.5L7.5 0.5H0.5Z" fill="#bbb"/></svg>
<div style="left:1138px;top:262px;width:9.5px;height:237.5px;background:linear-gradient(to right,#686868,#7a7a7a,#686868);border-radius:4px;"></div>
<div style="left:946px;top:506px;width:205px;height:31px;background:#262626;"></div>
<div style="left:951px;top:510.5px;width:20px;height:19.5px;background:#444;border-radius:2px;"></div>
<div style="left:972.8px;top:510.5px;width:20px;height:19.5px;background:#444;border-radius:2px;"></div>
<div style="left:994.6px;top:510.5px;width:20px;height:19.5px;background:#444;border-radius:2px;"></div>
<div style="left:1016.8px;top:510.5px;width:20px;height:19.5px;background:#444;border-radius:2px;"></div>
<div style="left:1039.4px;top:510.5px;width:20px;height:19.5px;background:#444;border-radius:2px;"></div>
<div style="left:1066.2px;top:510.5px;width:20px;height:19.5px;background:#444;border-radius:2px;"></div>
<div style="left:1089px;top:510.5px;width:20px;height:19.5px;background:#444;border-radius:2px;"></div>
<div style="left:1115.6px;top:510.5px;width:20px;height:19.5px;background:#444;border-radius:2px;"></div>
<div style="left:1062.6px;top:514px;width:1px;height:12px;background:#555;"></div>
<div style="left:1112px;top:514px;width:1px;height:12px;background:#555;"></div>
<svg style="left:951px;top:510.5px;" width="20" height="20" viewBox="0 0 20 20"><g transform="translate(10.0 10.0) scale(1.15) translate(-10.0 -10.0)"><path d="M5.5 3.5H11.5L14.5 6.5V16.5H5.5Z" fill="none" stroke="#f0f0f0" stroke-width="1.3"/></g></svg>
<svg style="left:972.8px;top:510.5px;" width="20" height="20" viewBox="0 0 20 20"><g transform="translate(10.0 10.0) scale(1.15) translate(-10.0 -10.0)"><path d="M5.5 3.5H11.5L14.5 6.5V16.5H5.5Z" fill="none" stroke="#f0f0f0" stroke-width="1.3"/><text x="10" y="14.6" font-size="8" font-weight="bold" text-anchor="middle" fill="#f0f0f0" font-family="'Liberation Sans',sans-serif">8</text></g></svg>
<svg style="left:994.6px;top:510.5px;" width="20" height="20" viewBox="0 0 20 20"><g transform="translate(10.0 10.0) scale(1.15) translate(-10.0 -10.0)"><path d="M5.5 3.5H11.5L14.5 6.5V16.5H5.5Z" fill="none" stroke="#f0f0f0" stroke-width="1.3"/><text x="10" y="14.6" font-size="8" font-weight="bold" text-anchor="middle" fill="#f0f0f0" font-family="'Liberation Sans',sans-serif">1</text></g></svg>
<svg style="left:1016.8px;top:510.5px;" width="20" height="20" viewBox="0 0 20 20"><g transform="translate(10.0 10.0) scale(1.15) translate(-10.0 -10.0)"><defs><pattern id="hp" width="3" height="3" patternUnits="userSpaceOnUse"><rect width="1.5" height="1.5" fill="#f0f0f0"/><rect x="1.5" y="1.5" width="1.5" height="1.5" fill="#f0f0f0"/></pattern></defs><rect x="4.5" y="4" width="11" height="12" fill="url(#hp)" stroke="#f0f0f0" stroke-width="1.1"/></g></svg>
<svg style="left:1039.4px;top:510.5px;" width="20" height="20" viewBox="0 0 20 20"><g transform="translate(10.0 10.0) scale(1.15) translate(-10.0 -10.0)"><path d="M3.5 5H8.5L10 6.8H16.5V15.5H3.5Z" fill="#f0f0f0"/></g></svg>
<svg style="left:1066.2px;top:510.5px;" width="20" height="20" viewBox="0 0 20 20"><g transform="translate(10.0 10.0) scale(1.15) translate(-10.0 -10.0)"><rect x="4" y="6.5" width="9" height="9" fill="none" stroke="#f0f0f0" stroke-width="1.3"/><path d="M7 6V4H16V13H13.5" fill="none" stroke="#f0f0f0" stroke-width="1.3"/></g></svg>
<svg style="left:1089px;top:510.5px;" width="20" height="20" viewBox="0 0 20 20"><g transform="translate(10.0 10.0) scale(1.15) translate(-10.0 -10.0)"><rect x="3.5" y="4" width="5" height="5" fill="#f0f0f0"/><rect x="3.5" y="11" width="5" height="5" fill="none" stroke="#f0f0f0" stroke-width="1"/><rect x="12" y="8" width="5" height="5" fill="#f0f0f0"/><path d="M8.5 6.5H10.5V13.5H8.5M10.5 10.5H12" fill="none" stroke="#f0f0f0" stroke-width="1"/></g></svg>
<svg style="left:1115.6px;top:510.5px;" width="20" height="20" viewBox="0 0 20 20"><g transform="translate(10.0 10.0) scale(1.15) translate(-10.0 -10.0)"><path d="M5 6.5H15V16.5H5Z" fill="none" stroke="#f0f0f0" stroke-width="1.6"/><path d="M4 5H16M8 3.5H12" stroke="#f0f0f0" stroke-width="1.6"/><path d="M8.2 8.5V14.5M11.8 8.5V14.5" stroke="#f0f0f0" stroke-width="1.5"/></g></svg>
<div style="left:946px;top:539.5px;width:205px;height:1px;background:#27496b;"></div>
<div style="left:946px;top:540.5px;width:205px;height:14px;background:linear-gradient(#3a3a3a,#303030);"></div>
<span class="t" style="left:1010.5px;top:541.0px;font-size:12px;line-height:14px;color:#c8c8c8;transform:scaleX(0.7562);font-weight:300;">ブラシサイズ</span>
<svg style="left:1128px;top:544.0px;" width="8" height="8" viewBox="0 0 8 8"><path d="M3.6 2.4H1.5V6.5H5.6V4.4" fill="none" stroke="#b4b4b4" stroke-width="1"/><path d="M4 4L6.6 1.4M4.6 1.2H6.8V3.4" fill="none" stroke="#b4b4b4" stroke-width="1"/></svg>
<svg style="left:1139.5px;top:543.5px;" width="9" height="9" viewBox="0 0 9 9"><path d="M2 2L7 7M7 2L2 7" stroke="#ddd" stroke-width="1.8"/></svg>
<div style="left:947px;top:554.5px;width:191px;height:159.5px;background:#575757;"></div>
<span class="t" style="left:962.8px;top:591.0px;font-size:9.5px;line-height:11.5px;color:#f0f0f0;transform:scaleX(0.8684);">1</span>
<span class="t" style="left:997.6px;top:591.0px;font-size:9.5px;line-height:11.5px;color:#f0f0f0;transform:scaleX(0.8775);">1.5</span>
<span class="t" style="left:1039.7px;top:591.0px;font-size:9.5px;line-height:11.5px;color:#f0f0f0;transform:scaleX(0.8684);">2</span>
<span class="t" style="left:1077.9px;top:591.0px;font-size:9.5px;line-height:11.5px;color:#f0f0f0;transform:scaleX(0.8684);">3</span>
<span class="t" style="left:1116.2px;top:591.0px;font-size:9.5px;line-height:11.5px;color:#f0f0f0;transform:scaleX(0.8684);">4</span>
<span class="t" style="left:962.8px;top:638.7px;font-size:9.5px;line-height:11.5px;color:#f0f0f0;transform:scaleX(0.8684);">5</span>
<span class="t" style="left:1001.1px;top:638.7px;font-size:9.5px;line-height:11.5px;color:#f0f0f0;transform:scaleX(0.8684);">7</span>
<span class="t" style="left:1037.0px;top:638.7px;font-size:9.5px;line-height:11.5px;color:#f0f0f0;transform:scaleX(0.9453);">10</span>
<span class="t" style="left:1075.2px;top:638.7px;font-size:9.5px;line-height:11.5px;color:#f0f0f0;transform:scaleX(0.9453);">12</span>
<span class="t" style="left:1113.5px;top:638.7px;font-size:9.5px;line-height:11.5px;color:#f0f0f0;transform:scaleX(0.9453);">15</span>
<span class="t" style="left:960.1px;top:687.3px;font-size:9.5px;line-height:11.5px;color:#f0f0f0;transform:scaleX(0.9453);">20</span>
<span class="t" style="left:998.4px;top:687.3px;font-size:9.5px;line-height:11.5px;color:#f0f0f0;transform:scaleX(0.9453);">25</span>
<span class="t" style="left:1037.0px;top:687.3px;font-size:9.5px;line-height:11.5px;color:#f0f0f0;transform:scaleX(0.9453);">30</span>
<span class="t" style="left:1075.2px;top:687.3px;font-size:9.5px;line-height:11.5px;color:#f0f0f0;transform:scaleX(0.9453);">40</span>
<span class="t" style="left:1113.5px;top:687.3px;font-size:9.5px;line-height:11.5px;color:#f0f0f0;transform:scaleX(0.9453);">50</span>
<svg style="left:947px;top:554.5px;" width="191" height="159.5" viewBox="0 0 191 159.5"><g fill="#f4f4f4"><circle cx="56.9" cy="20.7" r="0.35"/><circle cx="95.5" cy="20.7" r="0.50"/><circle cx="133.7" cy="20.7" r="0.80"/><circle cx="172.0" cy="20.7" r="1.25"/><circle cx="18.6" cy="68.4" r="1.65"/><circle cx="56.9" cy="68.4" r="2.20"/><circle cx="95.5" cy="68.4" r="3.50"/><circle cx="133.7" cy="68.4" r="4.15"/><circle cx="172.0" cy="68.4" r="5.00"/><circle cx="18.6" cy="117.0" r="6.65"/><circle cx="56.9" cy="117.0" r="8.20"/><circle cx="95.5" cy="117.0" r="9.85"/><circle cx="133.7" cy="117.0" r="11.80"/><circle cx="172.0" cy="117.0" r="11.80"/><circle cx="18.6" cy="164.8" r="11.80"/><circle cx="56.9" cy="164.8" r="11.80"/><circle cx="95.5" cy="164.8" r="11.80"/><circle cx="133.7" cy="164.8" r="11.80"/><circle cx="172.0" cy="164.8" r="11.80"/></g></svg>
<div style="left:983.7px;top:554.5px;width:1px;height:159.5px;background:#484848;"></div>
<div style="left:1023.1px;top:554.5px;width:1px;height:159.5px;background:#484848;"></div>
<div style="left:1060.9px;top:554.5px;width:1px;height:159.5px;background:#484848;"></div>
<div style="left:1099.5px;top:554.5px;width:1px;height:159.5px;background:#484848;"></div>
<div style="left:947px;top:601.7px;width:191px;height:1px;background:#484848;"></div>
<div style="left:947px;top:650.3px;width:191px;height:1px;background:#484848;"></div>
<div style="left:947px;top:698.1px;width:191px;height:1px;background:#484848;"></div>
<div style="left:946px;top:714px;width:206px;height:20px;background:#262626;"></div>
<div style="left:1138px;top:554.5px;width:12px;height:159.5px;background:#2e2e2e;"></div>
<svg style="left:1140px;top:557px;" width="8" height="6" viewBox="0 0 8 6"><path d="M4 0.5L7.5 5.5H0.5Z" fill="#bbb"/></svg>
<svg style="left:1140px;top:707px;" width="8" height="6" viewBox="0 0 8 6"><path d="M4 5.5L7.5 0.5H0.5Z" fill="#bbb"/></svg>
<div style="left:1139px;top:564px;width:10px;height:96px;background:linear-gradient(to right,#686868,#7a7a7a,#686868);border-radius:4px;"></div>
<div style="left:0px;top:0px;width:1152px;height:1px;background:#5c86ad;"></div>
<div style="left:0px;top:0px;width:1px;height:734px;background:#35597f;"></div>
<div style="left:1151px;top:0px;width:1px;height:734px;background:#35597f;"></div>
<div style="left:0px;top:733px;width:1152px;height:1px;background:#2b4f78;"></div>
<svg style="left:1143px;top:725px;" width="8" height="8" viewBox="0 0 8 8"><path d="M8 0V8H0Z" fill="#2f4a66"/></svg>
</div></body></html>
